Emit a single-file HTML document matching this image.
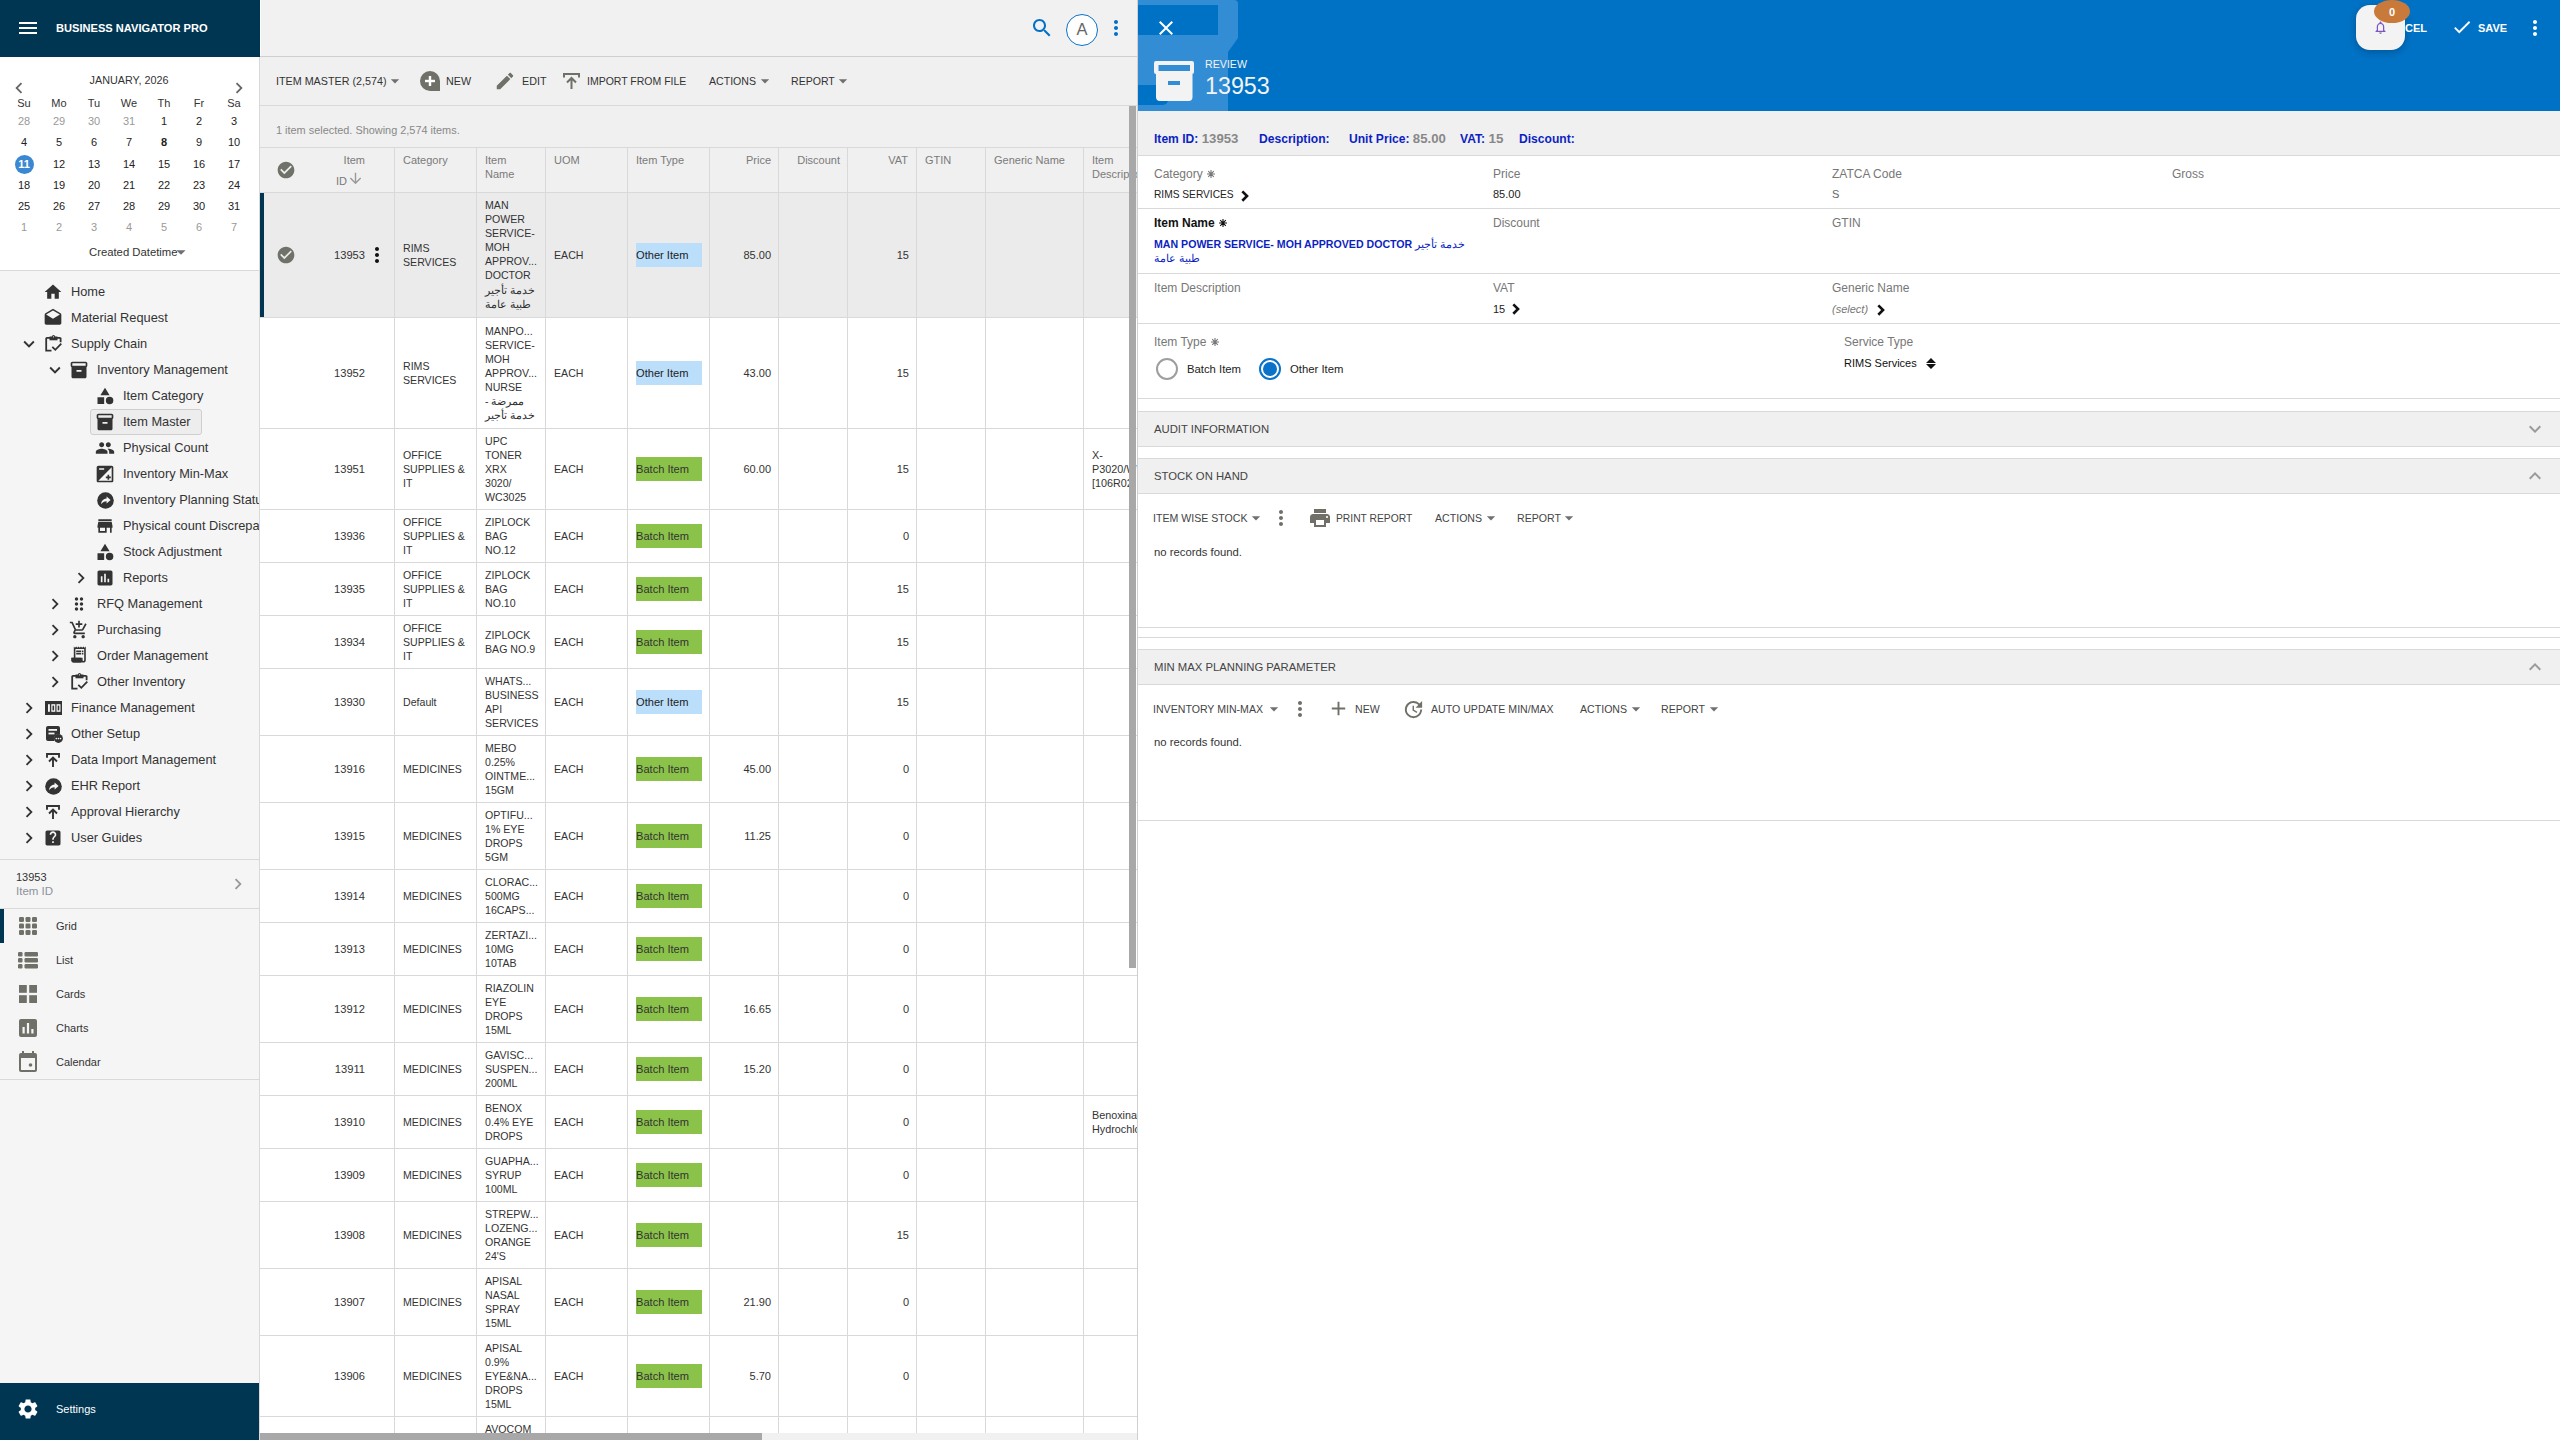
<!DOCTYPE html><html><head><meta charset="utf-8"><style>
*{margin:0;padding:0;box-sizing:border-box}
html,body{width:2560px;height:1440px;overflow:hidden;background:#fff;font-family:"Liberation Sans", sans-serif}
.a{position:absolute}
.t{position:absolute;white-space:nowrap}
</style></head><body>
<div class="a" style="left:0px;top:0px;width:260px;height:57px;background:#003652;"></div>
<svg class="a" style="left:16px;top:16px;" width="24" height="24" viewBox="0 0 24 24"><path fill="#fff" d="M3 18h18v-2H3v2zm0-5h18v-2H3v2zm0-7v2h18V6H3z"/></svg>
<div class="t" style="left:56px;top:18.0px;font-size:11.1px;line-height:20px;color:#fff;font-weight:700;">BUSINESS NAVIGATOR PRO</div>
<div class="a" style="left:0px;top:57px;width:259px;height:214px;background:#fff;"></div>
<div class="a" style="left:0px;top:270px;width:259px;height:1px;background:#d9d9d9;"></div>
<div class="t" style="left:-21px;width:300px;text-align:center;top:70.0px;font-size:10.8px;line-height:20px;color:#333;font-weight:400;">JANUARY, 2026</div>
<svg class="a" style="left:8px;top:77px;" width="22" height="22" viewBox="0 0 24 24"><path fill="#666" d="M15.41 7.41L14 6l-6 6 6 6 1.41-1.41L10.83 12z"/></svg>
<svg class="a" style="left:228px;top:77px;" width="22" height="22" viewBox="0 0 24 24"><path fill="#666" d="M10 6L8.59 7.41 13.17 12l-4.58 4.59L10 18l6-6z"/></svg>
<div class="t" style="left:-126px;width:300px;text-align:center;top:93.0px;font-size:11px;line-height:20px;color:#333;font-weight:400;">Su</div>
<div class="t" style="left:-91px;width:300px;text-align:center;top:93.0px;font-size:11px;line-height:20px;color:#333;font-weight:400;">Mo</div>
<div class="t" style="left:-56px;width:300px;text-align:center;top:93.0px;font-size:11px;line-height:20px;color:#333;font-weight:400;">Tu</div>
<div class="t" style="left:-21px;width:300px;text-align:center;top:93.0px;font-size:11px;line-height:20px;color:#333;font-weight:400;">We</div>
<div class="t" style="left:14px;width:300px;text-align:center;top:93.0px;font-size:11px;line-height:20px;color:#333;font-weight:400;">Th</div>
<div class="t" style="left:49px;width:300px;text-align:center;top:93.0px;font-size:11px;line-height:20px;color:#333;font-weight:400;">Fr</div>
<div class="t" style="left:84px;width:300px;text-align:center;top:93.0px;font-size:11px;line-height:20px;color:#333;font-weight:400;">Sa</div>
<div class="t" style="left:-126px;width:300px;text-align:center;top:111.0px;font-size:11px;line-height:20px;color:#999;font-weight:400;">28</div>
<div class="t" style="left:-91px;width:300px;text-align:center;top:111.0px;font-size:11px;line-height:20px;color:#999;font-weight:400;">29</div>
<div class="t" style="left:-56px;width:300px;text-align:center;top:111.0px;font-size:11px;line-height:20px;color:#999;font-weight:400;">30</div>
<div class="t" style="left:-21px;width:300px;text-align:center;top:111.0px;font-size:11px;line-height:20px;color:#999;font-weight:400;">31</div>
<div class="t" style="left:14px;width:300px;text-align:center;top:111.0px;font-size:11px;line-height:20px;color:#222;font-weight:400;">1</div>
<div class="t" style="left:49px;width:300px;text-align:center;top:111.0px;font-size:11px;line-height:20px;color:#222;font-weight:400;">2</div>
<div class="t" style="left:84px;width:300px;text-align:center;top:111.0px;font-size:11px;line-height:20px;color:#222;font-weight:400;">3</div>
<div class="t" style="left:-126px;width:300px;text-align:center;top:132.0px;font-size:11px;line-height:20px;color:#222;font-weight:400;">4</div>
<div class="t" style="left:-91px;width:300px;text-align:center;top:132.0px;font-size:11px;line-height:20px;color:#222;font-weight:400;">5</div>
<div class="t" style="left:-56px;width:300px;text-align:center;top:132.0px;font-size:11px;line-height:20px;color:#222;font-weight:400;">6</div>
<div class="t" style="left:-21px;width:300px;text-align:center;top:132.0px;font-size:11px;line-height:20px;color:#222;font-weight:400;">7</div>
<div class="t" style="left:14px;width:300px;text-align:center;top:132.0px;font-size:11px;line-height:20px;color:#222;font-weight:700;">8</div>
<div class="t" style="left:49px;width:300px;text-align:center;top:132.0px;font-size:11px;line-height:20px;color:#222;font-weight:400;">9</div>
<div class="t" style="left:84px;width:300px;text-align:center;top:132.0px;font-size:11px;line-height:20px;color:#222;font-weight:400;">10</div>
<div class="a" style="left:14.5px;top:154.5px;width:19px;height:19px;border-radius:50%;background:#3a87d2"></div>
<div class="t" style="left:-126px;width:300px;text-align:center;top:154.0px;font-size:11px;line-height:20px;color:#fff;font-weight:700;">11</div>
<div class="t" style="left:-91px;width:300px;text-align:center;top:154.0px;font-size:11px;line-height:20px;color:#222;font-weight:400;">12</div>
<div class="t" style="left:-56px;width:300px;text-align:center;top:154.0px;font-size:11px;line-height:20px;color:#222;font-weight:400;">13</div>
<div class="t" style="left:-21px;width:300px;text-align:center;top:154.0px;font-size:11px;line-height:20px;color:#222;font-weight:400;">14</div>
<div class="t" style="left:14px;width:300px;text-align:center;top:154.0px;font-size:11px;line-height:20px;color:#222;font-weight:400;">15</div>
<div class="t" style="left:49px;width:300px;text-align:center;top:154.0px;font-size:11px;line-height:20px;color:#222;font-weight:400;">16</div>
<div class="t" style="left:84px;width:300px;text-align:center;top:154.0px;font-size:11px;line-height:20px;color:#222;font-weight:400;">17</div>
<div class="t" style="left:-126px;width:300px;text-align:center;top:175.0px;font-size:11px;line-height:20px;color:#222;font-weight:400;">18</div>
<div class="t" style="left:-91px;width:300px;text-align:center;top:175.0px;font-size:11px;line-height:20px;color:#222;font-weight:400;">19</div>
<div class="t" style="left:-56px;width:300px;text-align:center;top:175.0px;font-size:11px;line-height:20px;color:#222;font-weight:400;">20</div>
<div class="t" style="left:-21px;width:300px;text-align:center;top:175.0px;font-size:11px;line-height:20px;color:#222;font-weight:400;">21</div>
<div class="t" style="left:14px;width:300px;text-align:center;top:175.0px;font-size:11px;line-height:20px;color:#222;font-weight:400;">22</div>
<div class="t" style="left:49px;width:300px;text-align:center;top:175.0px;font-size:11px;line-height:20px;color:#222;font-weight:400;">23</div>
<div class="t" style="left:84px;width:300px;text-align:center;top:175.0px;font-size:11px;line-height:20px;color:#222;font-weight:400;">24</div>
<div class="t" style="left:-126px;width:300px;text-align:center;top:196.0px;font-size:11px;line-height:20px;color:#222;font-weight:400;">25</div>
<div class="t" style="left:-91px;width:300px;text-align:center;top:196.0px;font-size:11px;line-height:20px;color:#222;font-weight:400;">26</div>
<div class="t" style="left:-56px;width:300px;text-align:center;top:196.0px;font-size:11px;line-height:20px;color:#222;font-weight:400;">27</div>
<div class="t" style="left:-21px;width:300px;text-align:center;top:196.0px;font-size:11px;line-height:20px;color:#222;font-weight:400;">28</div>
<div class="t" style="left:14px;width:300px;text-align:center;top:196.0px;font-size:11px;line-height:20px;color:#222;font-weight:400;">29</div>
<div class="t" style="left:49px;width:300px;text-align:center;top:196.0px;font-size:11px;line-height:20px;color:#222;font-weight:400;">30</div>
<div class="t" style="left:84px;width:300px;text-align:center;top:196.0px;font-size:11px;line-height:20px;color:#222;font-weight:400;">31</div>
<div class="t" style="left:-126px;width:300px;text-align:center;top:217.0px;font-size:11px;line-height:20px;color:#999;font-weight:400;">1</div>
<div class="t" style="left:-91px;width:300px;text-align:center;top:217.0px;font-size:11px;line-height:20px;color:#999;font-weight:400;">2</div>
<div class="t" style="left:-56px;width:300px;text-align:center;top:217.0px;font-size:11px;line-height:20px;color:#999;font-weight:400;">3</div>
<div class="t" style="left:-21px;width:300px;text-align:center;top:217.0px;font-size:11px;line-height:20px;color:#999;font-weight:400;">4</div>
<div class="t" style="left:14px;width:300px;text-align:center;top:217.0px;font-size:11px;line-height:20px;color:#999;font-weight:400;">5</div>
<div class="t" style="left:49px;width:300px;text-align:center;top:217.0px;font-size:11px;line-height:20px;color:#999;font-weight:400;">6</div>
<div class="t" style="left:84px;width:300px;text-align:center;top:217.0px;font-size:11px;line-height:20px;color:#999;font-weight:400;">7</div>
<div class="t" style="left:89px;top:242.0px;font-size:11.3px;line-height:20px;color:#333;font-weight:400;">Created Datetime</div>
<svg class="a" style="left:170px;top:240.5px;" width="22" height="22" viewBox="0 0 24 24"><path fill="#707070" d="M7 10l5 5 5-5z"/></svg>
<div class="a" style="left:0px;top:271px;width:259px;height:1112px;background:#f5f5f5;"></div>
<div class="a" style="left:259px;top:57px;width:1px;height:1383px;background:#d9d9d9;"></div>
<div class="a" style="left:0;top:271px;width:259px;height:600px;overflow:hidden">
<svg class="a" style="left:43px;top:10.75px;" width="20" height="20" viewBox="0 0 24 24"><path fill="#333" d="M10 20v-6h4v6h5v-8h3L12 3 2 12h3v8z"/></svg>
<div class="t" style="left:71px;top:10.75px;font-size:12.8px;line-height:20px;color:#333;font-weight:400;">Home</div>
<svg class="a" style="left:43px;top:36.75px;" width="20" height="20" viewBox="0 0 24 24"><path fill="#333" d="M21.99 8c0-.72-.37-1.35-.94-1.7L12 1 2.950 6.3C2.38 6.65 2 7.28 2 8v10c0 1.1.9 2 2 2h16c1.1 0 2-.9 2-2l-.01-10zM12 13L3.74 7.84 12 3l8.26 4.84L12 13z"/></svg>
<div class="t" style="left:71px;top:36.75px;font-size:12.8px;line-height:20px;color:#333;font-weight:400;">Material Request</div>
<svg class="a" style="left:17.5px;top:61.75px;" width="22" height="22" viewBox="0 0 24 24"><path fill="#333" d="M16.59 8.59L12 13.17 7.41 8.59 6 10l6 6 6-6z"/></svg>
<svg class="a" style="left:45px;top:64.25px;" width="17" height="17" viewBox="0 0 17 17"><path fill="none" stroke="#333" stroke-width="1.8" d="M1.2 2.8V15.6H6.5M15.6 2.8V7.2M1.2 2.8H15.6"/><path fill="#333" d="M4.5 1.5H12.5V5.3H4.5z"/><circle cx="8.5" cy="1.6" r="1.6" fill="#333"/><circle cx="8.5" cy="1.8" r="0.6" fill="#f5f5f5"/><path fill="none" stroke="#333" stroke-width="1.8" d="M7.3 11.8l3 3 6-6.2"/></svg>
<div class="t" style="left:71px;top:62.75px;font-size:12.8px;line-height:20px;color:#333;font-weight:400;">Supply Chain</div>
<svg class="a" style="left:43.5px;top:87.75px;" width="22" height="22" viewBox="0 0 24 24"><path fill="#333" d="M16.59 8.59L12 13.17 7.41 8.59 6 10l6 6 6-6z"/></svg>
<svg class="a" style="left:69px;top:88.75px;" width="20" height="20" viewBox="0 0 24 24"><path fill="#333" d="M20 2H4c-1 0-2 .9-2 2v3.01c0 .72.43 1.34 1 1.69V20c0 1.1 1.1 2 2 2h14c.9 0 2-.9 2-2V8.7c.57-.35 1-.97 1-1.69V4c0-1.1-1-2-2-2zm-5 12H9v-2h6v2zm5-7H4V4l16-.02V7z"/></svg>
<div class="t" style="left:97px;top:88.75px;font-size:12.8px;line-height:20px;color:#333;font-weight:400;">Inventory Management</div>
<svg class="a" style="left:95px;top:114.75px;" width="20" height="20" viewBox="0 0 24 24"><path fill="#333" d="M12 2l-5.5 9h11zM17.5 13a4.5 4.5 0 1 0 0 9 4.5 4.5 0 0 0 0-9zM3 13.5h8v8H3z"/></svg>
<div class="t" style="left:123px;top:114.75px;font-size:12.8px;line-height:20px;color:#333;font-weight:400;">Item Category</div>
<div class="a" style="left:90px;top:138px;width:112px;height:26px;background:#ededed;border:1px solid #cfcfcf;border-radius:3px"></div>
<svg class="a" style="left:95px;top:140.75px;" width="20" height="20" viewBox="0 0 24 24"><path fill="#333" d="M20 2H4c-1 0-2 .9-2 2v3.01c0 .72.43 1.34 1 1.69V20c0 1.1 1.1 2 2 2h14c.9 0 2-.9 2-2V8.7c.57-.35 1-.97 1-1.69V4c0-1.1-1-2-2-2zm-5 12H9v-2h6v2zm5-7H4V4l16-.02V7z"/></svg>
<div class="t" style="left:123px;top:140.75px;font-size:12.8px;line-height:20px;color:#333;font-weight:400;">Item Master</div>
<svg class="a" style="left:95px;top:166.75px;" width="20" height="20" viewBox="0 0 24 24"><path fill="#333" d="M16 11c1.66 0 2.99-1.34 2.99-3S17.66 5 16 5c-1.66 0-3 1.34-3 3s1.34 3 3 3zm-8 0c1.66 0 2.99-1.34 2.99-3S9.66 5 8 5C6.34 5 5 6.34 5 8s1.34 3 3 3zm0 2c-2.33 0-7 1.17-7 3.5V19h14v-2.5c0-2.33-4.67-3.5-7-3.5zm8 0c-.29 0-.62.02-.97.05 1.16.84 1.97 1.97 1.97 3.45V19h6v-2.5c0-2.33-4.67-3.5-7-3.5z"/></svg>
<div class="t" style="left:123px;top:166.75px;font-size:12.8px;line-height:20px;color:#333;font-weight:400;">Physical Count</div>
<svg class="a" style="left:95px;top:192.75px;" width="20" height="20" viewBox="0 0 24 24"><path fill="#333" d="M15 17v2h2v-2h2v-2h-2v-2h-2v2h-2v2h2zm5-15H4c-1.1 0-2 .9-2 2v16c0 1.1.9 2 2 2h16c1.1 0 2-.9 2-2V4c0-1.1-.9-2-2-2zM5 5h6v2H5V5zm15 15H4L20 4v16z"/></svg>
<div class="t" style="left:123px;top:192.75px;font-size:12.8px;line-height:20px;color:#333;font-weight:400;">Inventory Min-Max</div>
<svg class="a" style="left:96.7px;top:220.55px;" width="17" height="17" viewBox="0 0 17 17"><circle cx="8.5" cy="8.5" r="8.3" fill="#333"/><path fill="#f5f5f5" d="M4 12.2C4.2 9 6.3 6.8 9.6 6.6V4.4l4 3.6-4 3.6V9.2C7.2 9.3 5.6 10.3 4 12.2z"/></svg>
<div class="t" style="left:123px;top:218.75px;font-size:12.8px;line-height:20px;color:#333;font-weight:400;">Inventory Planning Status</div>
<svg class="a" style="left:95px;top:244.75px;" width="20" height="20" viewBox="0 0 24 24"><path fill="#333" d="M20 4H4v2h16V4zm1 10v-2l-1-5H4l-1 5v2h1v6h10v-6h4v6h2v-6h1zm-9 4H6v-4h6v4z"/></svg>
<div class="t" style="left:123px;top:244.75px;font-size:12.8px;line-height:20px;color:#333;font-weight:400;">Physical count Discrepancy</div>
<svg class="a" style="left:95px;top:270.75px;" width="20" height="20" viewBox="0 0 24 24"><path fill="#333" d="M12 2l-5.5 9h11zM17.5 13a4.5 4.5 0 1 0 0 9 4.5 4.5 0 0 0 0-9zM3 13.5h8v8H3z"/></svg>
<div class="t" style="left:123px;top:270.75px;font-size:12.8px;line-height:20px;color:#333;font-weight:400;">Stock Adjustment</div>
<svg class="a" style="left:69.5px;top:295.75px;" width="22" height="22" viewBox="0 0 24 24"><path fill="#333" d="M10 6L8.59 7.41 13.17 12l-4.58 4.59L10 18l6-6z"/></svg>
<svg class="a" style="left:95px;top:296.75px;" width="20" height="20" viewBox="0 0 24 24"><path fill="#333" d="M19 3H5c-1.1 0-2 .9-2 2v14c0 1.1.9 2 2 2h14c1.1 0 2-.9 2-2V5c0-1.1-.9-2-2-2zM9 17H7v-7h2v7zm4 0h-2V7h2v10zm4 0h-2v-4h2v4z"/></svg>
<div class="t" style="left:123px;top:296.75px;font-size:12.8px;line-height:20px;color:#333;font-weight:400;">Reports</div>
<svg class="a" style="left:43.5px;top:321.75px;" width="22" height="22" viewBox="0 0 24 24"><path fill="#333" d="M10 6L8.59 7.41 13.17 12l-4.58 4.59L10 18l6-6z"/></svg>
<svg class="a" style="left:69px;top:322.75px;" width="20" height="20" viewBox="0 0 24 24"><path fill="#333" d="M11 18c0 1.1-.9 2-2 2s-2-.9-2-2 .9-2 2-2 2 .9 2 2zm-2-8c-1.1 0-2 .9-2 2s.9 2 2 2 2-.9 2-2-.9-2-2-2zm0-6c-1.1 0-2 .9-2 2s.9 2 2 2 2-.9 2-2-.9-2-2-2zm6 4c1.1 0 2-.9 2-2s-.9-2-2-2-2 .9-2 2 .9 2 2 2zm0 2c-1.1 0-2 .9-2 2s.9 2 2 2 2-.9 2-2-.9-2-2-2zm0 6c-1.1 0-2 .9-2 2s.9 2 2 2 2-.9 2-2-.9-2-2-2z"/></svg>
<div class="t" style="left:97px;top:322.75px;font-size:12.8px;line-height:20px;color:#333;font-weight:400;">RFQ Management</div>
<svg class="a" style="left:43.5px;top:347.75px;" width="22" height="22" viewBox="0 0 24 24"><path fill="#333" d="M10 6L8.59 7.41 13.17 12l-4.58 4.59L10 18l6-6z"/></svg>
<svg class="a" style="left:69px;top:348.75px;" width="20" height="20" viewBox="0 0 24 24"><path fill="#333" d="M11 9h2V6h3V4h-3V1h-2v3H8v2h3v3zm-4 9c-1.1 0-1.99.9-1.99 2S5.9 22 7 22s2-.9 2-2-.9-2-2-2zm10 0c-1.1 0-1.99.9-1.99 2s.89 2 1.99 2 2-.9 2-2-.9-2-2-2zm-9.83-3.25l.03-.12.9-1.63h7.45c.75 0 1.41-.41 1.75-1.03l3.86-7.01L19.42 4h-.01l-1.1 2-2.76 5H8.53l-.13-.27L6.16 6l-.95-2-.94-2H1v2h2l3.6 7.59-1.35 2.45c-.16.28-.25.61-.25.96 0 1.1.9 2 2 2h12v-2H7.42c-.13 0-.25-.11-.25-.25z"/></svg>
<div class="t" style="left:97px;top:348.75px;font-size:12.8px;line-height:20px;color:#333;font-weight:400;">Purchasing</div>
<svg class="a" style="left:43.5px;top:373.75px;" width="22" height="22" viewBox="0 0 24 24"><path fill="#333" d="M10 6L8.59 7.41 13.17 12l-4.58 4.59L10 18l6-6z"/></svg>
<svg class="a" style="left:69.3px;top:374.05px" width="19.2" height="19.2" viewBox="0 0 24 24"><path fill="#333" d="M19.5 3.5L18 2l-1.5 1.5L15 2l-1.5 1.5L12 2l-1.5 1.5L9 2 7.5 3.5 6 2v14H3v3c0 1.66 1.34 3 3 3h12c1.66 0 3-1.34 3-3V2l-1.5 1.5zM15 20H6c-.55 0-1-.45-1-1v-1h10v2zm4-1c0 .55-.45 1-1 1s-1-.45-1-1v-3H8V5h11v14zM9 7h6v2H9zm7 0h2v2h-2zm-7 3h6v2H9zm7 0h2v2h-2z"/><path fill="#333" d="M3 16h12v6H6a3 3 0 0 1 -3 -3z"/></svg>
<div class="t" style="left:97px;top:374.75px;font-size:12.8px;line-height:20px;color:#333;font-weight:400;">Order Management</div>
<svg class="a" style="left:43.5px;top:399.75px;" width="22" height="22" viewBox="0 0 24 24"><path fill="#333" d="M10 6L8.59 7.41 13.17 12l-4.58 4.59L10 18l6-6z"/></svg>
<svg class="a" style="left:71px;top:402.25px;" width="17" height="17" viewBox="0 0 17 17"><path fill="none" stroke="#333" stroke-width="1.8" d="M1.2 2.8V15.6H6.5M15.6 2.8V7.2M1.2 2.8H15.6"/><path fill="#333" d="M4.5 1.5H12.5V5.3H4.5z"/><circle cx="8.5" cy="1.6" r="1.6" fill="#333"/><circle cx="8.5" cy="1.8" r="0.6" fill="#f5f5f5"/><path fill="none" stroke="#333" stroke-width="1.8" d="M7.3 11.8l3 3 6-6.2"/></svg>
<div class="t" style="left:97px;top:400.75px;font-size:12.8px;line-height:20px;color:#333;font-weight:400;">Other Inventory</div>
<svg class="a" style="left:17.5px;top:425.75px;" width="22" height="22" viewBox="0 0 24 24"><path fill="#333" d="M10 6L8.59 7.41 13.17 12l-4.58 4.59L10 18l6-6z"/></svg>
<svg class="a" style="left:44.7px;top:430.15px;" width="17" height="14" viewBox="0 0 17 14"><rect width="17" height="14" fill="#333"/><rect x="3" y="3.2" width="1.9" height="7.6" fill="#f5f5f5"/><rect x="6.3" y="3.2" width="4" height="7.6" fill="#f5f5f5"/><rect x="7.5" y="4.6" width="1.6" height="4.8" fill="#333"/><rect x="11.5" y="3.2" width="4" height="7.6" fill="#f5f5f5"/><rect x="12.7" y="4.6" width="1.6" height="4.8" fill="#333"/></svg>
<div class="t" style="left:71px;top:426.75px;font-size:12.8px;line-height:20px;color:#333;font-weight:400;">Finance Management</div>
<svg class="a" style="left:17.5px;top:451.75px;" width="22" height="22" viewBox="0 0 24 24"><path fill="#333" d="M10 6L8.59 7.41 13.17 12l-4.58 4.59L10 18l6-6z"/></svg>
<svg class="a" style="left:45.5px;top:455.25px;" width="17" height="17" viewBox="0 0 17 17"><path fill="#333" d="M2 0H12a2 2 0 0 1 2 2V8.2A5 5 0 0 0 8.2 15H2a2 2 0 0 1 -2 -2V2a2 2 0 0 1 2 -2z"/><rect x="2.5" y="3" width="8.5" height="1.8" fill="#f5f5f5"/><rect x="2.5" y="6.6" width="6" height="1.8" fill="#f5f5f5"/><circle cx="12.4" cy="12.4" r="4.5" fill="#333"/><circle cx="10.3" cy="12.6" r=".8" fill="#f5f5f5"/><circle cx="12.4" cy="12.6" r=".8" fill="#f5f5f5"/><circle cx="14.5" cy="12.6" r=".8" fill="#f5f5f5"/></svg>
<div class="t" style="left:71px;top:452.75px;font-size:12.8px;line-height:20px;color:#333;font-weight:400;">Other Setup</div>
<svg class="a" style="left:17.5px;top:477.75px;" width="22" height="22" viewBox="0 0 24 24"><path fill="#333" d="M10 6L8.59 7.41 13.17 12l-4.58 4.59L10 18l6-6z"/></svg>
<svg class="a" style="left:46px;top:482.05px;" width="14" height="14" viewBox="0 0 14 14"><path fill="none" stroke="#333" stroke-width="1.9" d="M1 4.8V1H13V4.8"/><path fill="none" stroke="#333" stroke-width="1.9" d="M7 14V4.5M3 8.5l4-4 4 4"/></svg>
<div class="t" style="left:71px;top:478.75px;font-size:12.8px;line-height:20px;color:#333;font-weight:400;">Data Import Management</div>
<svg class="a" style="left:17.5px;top:503.75px;" width="22" height="22" viewBox="0 0 24 24"><path fill="#333" d="M10 6L8.59 7.41 13.17 12l-4.58 4.59L10 18l6-6z"/></svg>
<svg class="a" style="left:44.7px;top:506.55px;" width="17" height="17" viewBox="0 0 17 17"><circle cx="8.5" cy="8.5" r="8.3" fill="#333"/><path fill="#f5f5f5" d="M4 12.2C4.2 9 6.3 6.8 9.6 6.6V4.4l4 3.6-4 3.6V9.2C7.2 9.3 5.6 10.3 4 12.2z"/></svg>
<div class="t" style="left:71px;top:504.75px;font-size:12.8px;line-height:20px;color:#333;font-weight:400;">EHR Report</div>
<svg class="a" style="left:17.5px;top:529.75px;" width="22" height="22" viewBox="0 0 24 24"><path fill="#333" d="M10 6L8.59 7.41 13.17 12l-4.58 4.59L10 18l6-6z"/></svg>
<svg class="a" style="left:46px;top:534.05px;" width="14" height="14" viewBox="0 0 14 14"><path fill="none" stroke="#333" stroke-width="1.9" d="M1 4.8V1H13V4.8"/><path fill="none" stroke="#333" stroke-width="1.9" d="M7 14V4.5M3 8.5l4-4 4 4"/></svg>
<div class="t" style="left:71px;top:530.75px;font-size:12.8px;line-height:20px;color:#333;font-weight:400;">Approval Hierarchy</div>
<svg class="a" style="left:17.5px;top:555.75px;" width="22" height="22" viewBox="0 0 24 24"><path fill="#333" d="M10 6L8.59 7.41 13.17 12l-4.58 4.59L10 18l6-6z"/></svg>
<svg class="a" style="left:43px;top:556.75px;" width="20" height="20" viewBox="0 0 24 24"><path fill="#333" d="M19 3H5c-1.11 0-2 .9-2 2v14c0 1.1.89 2 2 2h14c1.1 0 2-.9 2-2V5c0-1.1-.9-2-2-2zm-6 15h-2v-2h2v2zm2.07-7.75l-.9.92C13.45 11.9 13 12.5 13 14h-2v-.5c0-1.1.45-2.1 1.17-2.83l1.24-1.26c.37-.36.59-.86.59-1.41 0-1.1-.9-2-2-2s-2 .9-2 2H8c0-2.21 1.79-4 4-4s4 1.79 4 4c0 .88-.36 1.68-.93 2.25z"/></svg>
<div class="t" style="left:71px;top:556.75px;font-size:12.8px;line-height:20px;color:#333;font-weight:400;">User Guides</div>
</div>
<div class="a" style="left:0px;top:859px;width:259px;height:1px;background:#d9d9d9;"></div>
<div class="t" style="left:16px;top:867.0px;font-size:11px;line-height:20px;color:#333;font-weight:400;">13953</div>
<div class="t" style="left:16px;top:880.5px;font-size:11.5px;line-height:20px;color:#8d929c;font-weight:400;">Item ID</div>
<svg class="a" style="left:227px;top:873px;" width="22" height="22" viewBox="0 0 24 24"><path fill="#999" d="M10 6L8.59 7.41 13.17 12l-4.58 4.59L10 18l6-6z"/></svg>
<div class="a" style="left:0px;top:908px;width:259px;height:1px;background:#d9d9d9;"></div>
<div class="a" style="left:0px;top:909px;width:4px;height:34px;background:#003652;"></div>
<svg class="a" style="left:19px;top:917px;" width="18" height="18" viewBox="0 0 18 18"><rect x="0" y="0" width="5" height="5" rx="1.2" fill="#6f7168"/><rect x="0" y="6.5" width="5" height="5" rx="1.2" fill="#6f7168"/><rect x="0" y="13" width="5" height="5" rx="1.2" fill="#6f7168"/><rect x="6.5" y="0" width="5" height="5" rx="1.2" fill="#6f7168"/><rect x="6.5" y="6.5" width="5" height="5" rx="1.2" fill="#6f7168"/><rect x="6.5" y="13" width="5" height="5" rx="1.2" fill="#6f7168"/><rect x="13" y="0" width="5" height="5" rx="1.2" fill="#6f7168"/><rect x="13" y="6.5" width="5" height="5" rx="1.2" fill="#6f7168"/><rect x="13" y="13" width="5" height="5" rx="1.2" fill="#6f7168"/></svg>
<svg class="a" style="left:18px;top:952px;" width="20" height="17" viewBox="0 0 20 17"><rect x="0" y="0" width="4.5" height="4.5" rx="1.2" fill="#6f7168"/><rect x="6.5" y="0" width="13.5" height="4.5" rx="1.2" fill="#6f7168"/><rect x="0" y="6" width="4.5" height="4.5" rx="1.2" fill="#6f7168"/><rect x="6.5" y="6" width="13.5" height="4.5" rx="1.2" fill="#6f7168"/><rect x="0" y="12" width="4.5" height="4.5" rx="1.2" fill="#6f7168"/><rect x="6.5" y="12" width="13.5" height="4.5" rx="1.2" fill="#6f7168"/></svg>
<svg class="a" style="left:19px;top:985px;" width="18" height="18" viewBox="0 0 18 18"><rect x="0" y="0" width="7.8" height="7.8" fill="#6f7168"/><rect x="0" y="10.2" width="7.8" height="7.8" fill="#6f7168"/><rect x="10.2" y="0" width="7.8" height="7.8" fill="#6f7168"/><rect x="10.2" y="10.2" width="7.8" height="7.8" fill="#6f7168"/></svg>
<svg class="a" style="left:19px;top:1019px;" width="18" height="18" viewBox="0 0 18 18"><rect x="0" y="0" width="18" height="18" rx="2" fill="#6f7168"/><rect x="3.5" y="8" width="2.2" height="6.5" fill="#f5f5f5"/><rect x="7.9" y="4" width="2.2" height="10.5" fill="#f5f5f5"/><rect x="12.3" y="10" width="2.2" height="4.5" fill="#f5f5f5"/></svg>
<svg class="a" style="left:19px;top:1051px;" width="18" height="21" viewBox="0 0 18 21"><path fill="#6f7168" d="M3 0h2v2h8V0h2v2h1a2 2 0 0 1 2 2v15a2 2 0 0 1 -2 2H2a2 2 0 0 1 -2 -2V4a2 2 0 0 1 2 -2h1zM2 7v12h14V7z"/><circle cx="11.5" cy="14" r="1.8" fill="#6f7168"/></svg>
<div class="t" style="left:56px;top:916.0px;font-size:11px;line-height:20px;color:#333;font-weight:400;">Grid</div>
<div class="t" style="left:56px;top:950.0px;font-size:11px;line-height:20px;color:#333;font-weight:400;">List</div>
<div class="t" style="left:56px;top:984.0px;font-size:11px;line-height:20px;color:#333;font-weight:400;">Cards</div>
<div class="t" style="left:56px;top:1018.0px;font-size:11px;line-height:20px;color:#333;font-weight:400;">Charts</div>
<div class="t" style="left:56px;top:1052.0px;font-size:11px;line-height:20px;color:#333;font-weight:400;">Calendar</div>
<div class="a" style="left:0px;top:1079px;width:259px;height:1px;background:#d9d9d9;"></div>
<div class="a" style="left:0px;top:1383px;width:259px;height:57px;background:#003652;"></div>
<svg class="a" style="left:16px;top:1397px;" width="24" height="24" viewBox="0 0 24 24"><path fill="#fff" d="M19.14 12.94c.04-.3.06-.61.06-.94 0-.32-.02-.64-.07-.94l2.03-1.58c.18-.14.23-.41.12-.61l-1.92-3.32c-.12-.22-.37-.29-.59-.22l-2.39.96c-.5-.38-1.03-.7-1.62-.94l-.36-2.54c-.04-.24-.24-.41-.48-.41h-3.84c-.24 0-.43.17-.47.41l-.36 2.54c-.59.24-1.13.57-1.62.94l-2.39-.96c-.22-.08-.47 0-.59.22L2.74 8.87c-.12.21-.08.47.12.61l2.03 1.58c-.05.3-.09.63-.09.94s.02.64.07.94l-2.03 1.58c-.18.14-.23.41-.12.61l1.92 3.32c.12.22.37.29.59.22l2.39-.96c.5.38 1.03.7 1.62.94l.36 2.54c.05.24.24.41.48.41h3.84c.24 0 .44-.17.47-.41l.36-2.54c.59-.24 1.13-.56 1.62-.94l2.39.96c.22.08.47 0 .59-.22l1.92-3.32c.12-.22.07-.47-.12-.61l-2.01-1.58zM12 15.6c-1.98 0-3.6-1.62-3.6-3.6s1.62-3.6 3.6-3.6 3.6 1.62 3.6 3.6-1.62 3.6-3.6 3.6z"/></svg>
<div class="t" style="left:56px;top:1399.0px;font-size:11px;line-height:20px;color:#fff;font-weight:400;">Settings</div>
<div class="a" style="left:260px;top:0px;width:877px;height:56px;background:#f1f1f1;"></div>
<div class="a" style="left:260px;top:0px;width:1px;height:56px;background:#fff;"></div>
<div class="a" style="left:260px;top:56px;width:877px;height:1px;background:#cfcfcf;"></div>
<svg class="a" style="left:1030px;top:16px;" width="24" height="24" viewBox="0 0 24 24"><path fill="#0070c9" d="M15.5 14h-.79l-.28-.27C15.41 12.59 16 11.11 16 9.5 16 5.91 13.09 3 9.5 3S3 5.91 3 9.5 5.91 16 9.5 16c1.61 0 3.090-.59 4.23-1.57l.27.28v.79l5 4.99L20.49 19l-4.99-5zm-6 0C7.01 14 5 11.99 5 9.5S7.01 5 9.5 5 14 7.01 14 9.5 11.99 14 9.5 14z"/></svg>
<div class="a" style="left:1066px;top:14px;width:32px;height:32px;border-radius:50%;border:1.5px solid #0a72c8;background:#fff"></div>
<div class="t" style="left:932px;width:300px;text-align:center;top:18.7px;font-size:16.5px;line-height:20px;color:#666;font-weight:400;">A</div>
<svg class="a" style="left:1104px;top:16px;" width="24" height="24" viewBox="0 0 24 24"><path fill="#0070c9" d="M12 8c1.1 0 2-.9 2-2s-.9-2-2-2-2 .9-2 2 .9 2 2 2zm0 2c-1.1 0-2 .9-2 2s.9 2 2 2 2-.9 2-2-.9-2-2-2zm0 6c-1.1 0-2 .9-2 2s.9 2 2 2 2-.9 2-2-.9-2-2-2z"/></svg>
<div class="a" style="left:260px;top:57px;width:877px;height:48px;background:#f0f0f0;"></div>
<div class="a" style="left:260px;top:105px;width:877px;height:1px;background:#d9d9d9;"></div>
<div class="t" style="left:276px;top:71.0px;font-size:10.75px;line-height:20px;color:#333;font-weight:400;">ITEM MASTER (2,574)</div>
<svg class="a" style="left:385px;top:71px;" width="20" height="20" viewBox="0 0 24 24"><path fill="#707070" d="M7 10l5 5 5-5z"/></svg>
<svg class="a" style="left:420px;top:71px;" width="20" height="20" viewBox="0 0 20 20"><path fill="#6f7168" d="M10 0A10 10 0 0 0 0 10 10 10 0 0 0 10 20H20V10A10 10 0 0 0 10 0z"/><rect x="5" y="8.8" width="10" height="2.4" fill="#fff"/><rect x="8.8" y="5" width="2.4" height="10" fill="#fff"/></svg>
<div class="t" style="left:446px;top:71.0px;font-size:10.75px;line-height:20px;color:#333;font-weight:400;">NEW</div>
<svg class="a" style="left:494px;top:70px;" width="22" height="22" viewBox="0 0 24 24"><path fill="#707068" d="M3 17.25V21h3.75L17.81 9.94l-3.75-3.75L3 17.25zM20.71 7.04c.39-.39.39-1.02 0-1.41l-2.34-2.340c-.39-.39-1.02-.39-1.41 0l-1.83 1.83 3.75 3.75 1.83-1.83z"/></svg>
<div class="t" style="left:522px;top:71.0px;font-size:10.75px;line-height:20px;color:#333;font-weight:400;">EDIT</div>
<svg class="a" style="left:563px;top:73px;" width="17" height="16" viewBox="0 0 17 16"><path fill="none" stroke="#6f7168" stroke-width="2" d="M1 4.5V1H16V4.5"/><path fill="none" stroke="#6f7168" stroke-width="2" d="M8.5 16V5M4 9.5l4.5-4.5 4.5 4.5"/></svg>
<div class="t" style="left:587px;top:71.0px;font-size:10.5px;line-height:20px;color:#333;font-weight:400;">IMPORT FROM FILE</div>
<div class="t" style="left:709px;top:71.0px;font-size:10.57px;line-height:20px;color:#333;font-weight:400;">ACTIONS</div>
<svg class="a" style="left:755px;top:71px;" width="20" height="20" viewBox="0 0 24 24"><path fill="#707070" d="M7 10l5 5 5-5z"/></svg>
<div class="t" style="left:791px;top:71.0px;font-size:10.57px;line-height:20px;color:#333;font-weight:400;">REPORT</div>
<svg class="a" style="left:832.5px;top:71px;" width="20" height="20" viewBox="0 0 24 24"><path fill="#707070" d="M7 10l5 5 5-5z"/></svg>
<div class="a" style="left:260px;top:106px;width:877px;height:41px;background:#f0f0f0;"></div>
<div class="t" style="left:276px;top:120.0px;font-size:10.92px;line-height:20px;color:#888;font-weight:400;">1 item selected. Showing 2,574 items.</div>
<div class="a" style="left:260px;top:147px;width:877px;height:1px;background:#d9d9d9;"></div>
<div class="a" style="left:260px;top:148px;width:877px;height:44px;background:#f0f0f0;"></div>
<div class="a" style="left:260px;top:192px;width:877px;height:1px;background:#d9d9d9;"></div>
<div class="a" style="left:260px;top:0;width:877px;height:1433px;overflow:hidden">
<svg class="a" style="left:16px;top:160px;" width="20" height="20" viewBox="0 0 24 24"><path fill="#6f7268" d="M12 2C6.48 2 2 6.48 2 12s4.48 10 10 10 10-4.48 10-10S17.52 2 12 2zm-2 15l-5-5 1.41-1.41L10 14.17l7.590-7.59L19 8l-9 9z"/></svg>
<div class="t" style="left:-195px;width:300px;text-align:right;top:150.0px;font-size:11px;line-height:20px;color:#7a7a7a;font-weight:400;">Item</div>
<div class="t" style="left:76px;top:170.5px;font-size:11px;line-height:20px;color:#7a7a7a;font-weight:400;">ID</div>
<svg class="a" style="left:87px;top:170px;" width="17" height="17" viewBox="0 0 24 24"><path fill="#9a9a9a" d="M20 12l-1.41-1.41L13 16.17V4h-2v12.17l-5.58-5.59L4 12l8 8 8-8z"/></svg>
<div class="t" style="left:143px;top:150.0px;font-size:11px;line-height:20px;color:#7a7a7a;font-weight:400;">Category</div>
<div class="t" style="left:225px;top:150.0px;font-size:11px;line-height:20px;color:#7a7a7a;font-weight:400;">Item</div>
<div class="t" style="left:225px;top:164.0px;font-size:11px;line-height:20px;color:#7a7a7a;font-weight:400;">Name</div>
<div class="t" style="left:294px;top:150.0px;font-size:11px;line-height:20px;color:#7a7a7a;font-weight:400;">UOM</div>
<div class="t" style="left:376px;top:150.0px;font-size:11px;line-height:20px;color:#7a7a7a;font-weight:400;">Item Type</div>
<div class="t" style="left:211px;width:300px;text-align:right;top:150.0px;font-size:11px;line-height:20px;color:#7a7a7a;font-weight:400;">Price</div>
<div class="t" style="left:280px;width:300px;text-align:right;top:150.0px;font-size:11px;line-height:20px;color:#7a7a7a;font-weight:400;">Discount</div>
<div class="t" style="left:348px;width:300px;text-align:right;top:150.0px;font-size:11px;line-height:20px;color:#7a7a7a;font-weight:400;">VAT</div>
<div class="t" style="left:665px;top:150.0px;font-size:11px;line-height:20px;color:#7a7a7a;font-weight:400;">GTIN</div>
<div class="t" style="left:734px;top:150.0px;font-size:11px;line-height:20px;color:#7a7a7a;font-weight:400;">Generic Name</div>
<div class="t" style="left:832px;top:150.0px;font-size:11px;line-height:20px;color:#7a7a7a;font-weight:400;">Item</div>
<div class="t" style="left:832px;top:164.0px;font-size:11px;line-height:20px;color:#7a7a7a;font-weight:400;">Description</div>
<div class="a" style="left:0px;top:193px;width:877px;height:124px;background:#ebebeb;"></div>
<div class="a" style="left:0px;top:193px;width:4px;height:124px;background:#003652;"></div>
<svg class="a" style="left:16px;top:245.0px;" width="20" height="20" viewBox="0 0 24 24"><path fill="#6f7268" d="M12 2C6.48 2 2 6.48 2 12s4.48 10 10 10 10-4.48 10-10S17.52 2 12 2zm-2 15l-5-5 1.41-1.41L10 14.17l7.590-7.59L19 8l-9 9z"/></svg>
<svg class="a" style="left:105px;top:243.0px;" width="24" height="24" viewBox="0 0 24 24"><path fill="#111" d="M12 8c1.1 0 2-.9 2-2s-.9-2-2-2-2 .9-2 2 .9 2 2 2zm0 2c-1.1 0-2 .9-2 2s.9 2 2 2 2-.9 2-2-.9-2-2-2zm0 6c-1.1 0-2 .9-2 2s.9 2 2 2 2-.9 2-2-.9-2-2-2z"/></svg>
<div class="a" style="left:0px;top:317px;width:877px;height:1px;background:#d9d9d9;"></div>
<div class="t" style="left:-195px;width:300px;text-align:right;top:245.0px;font-size:11.15px;line-height:20px;color:#333;font-weight:400;">13953</div>
<div class="t" style="left:225px;top:195.3px;font-size:10.6px;line-height:20px;color:#333;font-weight:400;">MAN</div>
<div class="t" style="left:225px;top:209.3px;font-size:10.6px;line-height:20px;color:#333;font-weight:400;">POWER</div>
<div class="t" style="left:225px;top:223.3px;font-size:10.6px;line-height:20px;color:#333;font-weight:400;">SERVICE-</div>
<div class="t" style="left:225px;top:237.3px;font-size:10.6px;line-height:20px;color:#333;font-weight:400;">MOH</div>
<div class="t" style="left:225px;top:251.3px;font-size:10.6px;line-height:20px;color:#333;font-weight:400;">APPROV...</div>
<div class="t" style="left:225px;top:265.3px;font-size:10.6px;line-height:20px;color:#333;font-weight:400;">DOCTOR</div>
<div class="t" style="left:225px;top:280.0px;font-size:10.6px;line-height:20px;color:#333;font-weight:400;">خدمة تأجير</div>
<div class="t" style="left:225px;top:294.0px;font-size:10.6px;line-height:20px;color:#333;font-weight:400;">طبية عامة</div>
<div class="t" style="left:143px;top:238.0px;font-size:10.6px;line-height:20px;color:#333;font-weight:400;">RIMS</div>
<div class="t" style="left:143px;top:252.0px;font-size:10.6px;line-height:20px;color:#333;font-weight:400;">SERVICES</div>
<div class="t" style="left:294px;top:245.0px;font-size:10.6px;line-height:20px;color:#333;font-weight:400;">EACH</div>
<div class="a" style="left:376px;top:243.0px;width:66px;height:24px;background:#bbdefb;"></div>
<div class="t" style="left:376px;top:245.0px;font-size:11.1px;line-height:20px;color:#222;font-weight:400;">Other Item</div>
<div class="t" style="left:211px;width:300px;text-align:right;top:245.0px;font-size:11px;line-height:20px;color:#333;font-weight:400;">85.00</div>
<div class="t" style="left:349px;width:300px;text-align:right;top:245.0px;font-size:11px;line-height:20px;color:#333;font-weight:400;">15</div>
<div class="a" style="left:0px;top:428px;width:877px;height:1px;background:#d9d9d9;"></div>
<div class="t" style="left:-195px;width:300px;text-align:right;top:363.0px;font-size:11.15px;line-height:20px;color:#333;font-weight:400;">13952</div>
<div class="t" style="left:225px;top:321.0px;font-size:10.6px;line-height:20px;color:#333;font-weight:400;">MANPO...</div>
<div class="t" style="left:225px;top:335.0px;font-size:10.6px;line-height:20px;color:#333;font-weight:400;">SERVICE-</div>
<div class="t" style="left:225px;top:349.0px;font-size:10.6px;line-height:20px;color:#333;font-weight:400;">MOH</div>
<div class="t" style="left:225px;top:363.0px;font-size:10.6px;line-height:20px;color:#333;font-weight:400;">APPROV...</div>
<div class="t" style="left:225px;top:377.0px;font-size:10.6px;line-height:20px;color:#333;font-weight:400;">NURSE</div>
<div class="t" style="left:225px;top:391.0px;font-size:10.6px;line-height:20px;color:#333;font-weight:400;">- ممرضة</div>
<div class="t" style="left:225px;top:405.0px;font-size:10.6px;line-height:20px;color:#333;font-weight:400;">خدمة تأجير</div>
<div class="t" style="left:143px;top:356.0px;font-size:10.6px;line-height:20px;color:#333;font-weight:400;">RIMS</div>
<div class="t" style="left:143px;top:370.0px;font-size:10.6px;line-height:20px;color:#333;font-weight:400;">SERVICES</div>
<div class="t" style="left:294px;top:363.0px;font-size:10.6px;line-height:20px;color:#333;font-weight:400;">EACH</div>
<div class="a" style="left:376px;top:361.0px;width:66px;height:24px;background:#bbdefb;"></div>
<div class="t" style="left:376px;top:363.0px;font-size:11.1px;line-height:20px;color:#222;font-weight:400;">Other Item</div>
<div class="t" style="left:211px;width:300px;text-align:right;top:363.0px;font-size:11px;line-height:20px;color:#333;font-weight:400;">43.00</div>
<div class="t" style="left:349px;width:300px;text-align:right;top:363.0px;font-size:11px;line-height:20px;color:#333;font-weight:400;">15</div>
<div class="a" style="left:0px;top:509px;width:877px;height:1px;background:#d9d9d9;"></div>
<div class="t" style="left:-195px;width:300px;text-align:right;top:459.0px;font-size:11.15px;line-height:20px;color:#333;font-weight:400;">13951</div>
<div class="t" style="left:225px;top:431.0px;font-size:10.6px;line-height:20px;color:#333;font-weight:400;">UPC</div>
<div class="t" style="left:225px;top:445.0px;font-size:10.6px;line-height:20px;color:#333;font-weight:400;">TONER</div>
<div class="t" style="left:225px;top:459.0px;font-size:10.6px;line-height:20px;color:#333;font-weight:400;">XRX</div>
<div class="t" style="left:225px;top:473.0px;font-size:10.6px;line-height:20px;color:#333;font-weight:400;">3020/</div>
<div class="t" style="left:225px;top:487.0px;font-size:10.6px;line-height:20px;color:#333;font-weight:400;">WC3025</div>
<div class="t" style="left:143px;top:445.0px;font-size:10.6px;line-height:20px;color:#333;font-weight:400;">OFFICE</div>
<div class="t" style="left:143px;top:459.0px;font-size:10.6px;line-height:20px;color:#333;font-weight:400;">SUPPLIES &amp;</div>
<div class="t" style="left:143px;top:473.0px;font-size:10.6px;line-height:20px;color:#333;font-weight:400;">IT</div>
<div class="t" style="left:294px;top:459.0px;font-size:10.6px;line-height:20px;color:#333;font-weight:400;">EACH</div>
<div class="a" style="left:376px;top:457.0px;width:66px;height:24px;background:#8bc34a;"></div>
<div class="t" style="left:376px;top:459.0px;font-size:11.1px;line-height:20px;color:#333;font-weight:400;">Batch Item</div>
<div class="t" style="left:211px;width:300px;text-align:right;top:459.0px;font-size:11px;line-height:20px;color:#333;font-weight:400;">60.00</div>
<div class="t" style="left:349px;width:300px;text-align:right;top:459.0px;font-size:11px;line-height:20px;color:#333;font-weight:400;">15</div>
<div class="t" style="left:832px;top:445.0px;font-size:10.8px;line-height:20px;color:#333;font-weight:400;">X-</div>
<div class="t" style="left:832px;top:459.0px;font-size:10.8px;line-height:20px;color:#333;font-weight:400;">P3020/W</div>
<div class="t" style="left:832px;top:473.0px;font-size:10.8px;line-height:20px;color:#333;font-weight:400;">[106R02</div>
<div class="a" style="left:0px;top:562px;width:877px;height:1px;background:#d9d9d9;"></div>
<div class="t" style="left:-195px;width:300px;text-align:right;top:526.0px;font-size:11.15px;line-height:20px;color:#333;font-weight:400;">13936</div>
<div class="t" style="left:225px;top:512.0px;font-size:10.6px;line-height:20px;color:#333;font-weight:400;">ZIPLOCK</div>
<div class="t" style="left:225px;top:526.0px;font-size:10.6px;line-height:20px;color:#333;font-weight:400;">BAG</div>
<div class="t" style="left:225px;top:540.0px;font-size:10.6px;line-height:20px;color:#333;font-weight:400;">NO.12</div>
<div class="t" style="left:143px;top:512.0px;font-size:10.6px;line-height:20px;color:#333;font-weight:400;">OFFICE</div>
<div class="t" style="left:143px;top:526.0px;font-size:10.6px;line-height:20px;color:#333;font-weight:400;">SUPPLIES &amp;</div>
<div class="t" style="left:143px;top:540.0px;font-size:10.6px;line-height:20px;color:#333;font-weight:400;">IT</div>
<div class="t" style="left:294px;top:526.0px;font-size:10.6px;line-height:20px;color:#333;font-weight:400;">EACH</div>
<div class="a" style="left:376px;top:524.0px;width:66px;height:24px;background:#8bc34a;"></div>
<div class="t" style="left:376px;top:526.0px;font-size:11.1px;line-height:20px;color:#333;font-weight:400;">Batch Item</div>
<div class="t" style="left:349px;width:300px;text-align:right;top:526.0px;font-size:11px;line-height:20px;color:#333;font-weight:400;">0</div>
<div class="a" style="left:0px;top:615px;width:877px;height:1px;background:#d9d9d9;"></div>
<div class="t" style="left:-195px;width:300px;text-align:right;top:579.0px;font-size:11.15px;line-height:20px;color:#333;font-weight:400;">13935</div>
<div class="t" style="left:225px;top:565.0px;font-size:10.6px;line-height:20px;color:#333;font-weight:400;">ZIPLOCK</div>
<div class="t" style="left:225px;top:579.0px;font-size:10.6px;line-height:20px;color:#333;font-weight:400;">BAG</div>
<div class="t" style="left:225px;top:593.0px;font-size:10.6px;line-height:20px;color:#333;font-weight:400;">NO.10</div>
<div class="t" style="left:143px;top:565.0px;font-size:10.6px;line-height:20px;color:#333;font-weight:400;">OFFICE</div>
<div class="t" style="left:143px;top:579.0px;font-size:10.6px;line-height:20px;color:#333;font-weight:400;">SUPPLIES &amp;</div>
<div class="t" style="left:143px;top:593.0px;font-size:10.6px;line-height:20px;color:#333;font-weight:400;">IT</div>
<div class="t" style="left:294px;top:579.0px;font-size:10.6px;line-height:20px;color:#333;font-weight:400;">EACH</div>
<div class="a" style="left:376px;top:577.0px;width:66px;height:24px;background:#8bc34a;"></div>
<div class="t" style="left:376px;top:579.0px;font-size:11.1px;line-height:20px;color:#333;font-weight:400;">Batch Item</div>
<div class="t" style="left:349px;width:300px;text-align:right;top:579.0px;font-size:11px;line-height:20px;color:#333;font-weight:400;">15</div>
<div class="a" style="left:0px;top:668px;width:877px;height:1px;background:#d9d9d9;"></div>
<div class="t" style="left:-195px;width:300px;text-align:right;top:632.0px;font-size:11.15px;line-height:20px;color:#333;font-weight:400;">13934</div>
<div class="t" style="left:225px;top:625.0px;font-size:10.6px;line-height:20px;color:#333;font-weight:400;">ZIPLOCK</div>
<div class="t" style="left:225px;top:639.0px;font-size:10.6px;line-height:20px;color:#333;font-weight:400;">BAG NO.9</div>
<div class="t" style="left:143px;top:618.0px;font-size:10.6px;line-height:20px;color:#333;font-weight:400;">OFFICE</div>
<div class="t" style="left:143px;top:632.0px;font-size:10.6px;line-height:20px;color:#333;font-weight:400;">SUPPLIES &amp;</div>
<div class="t" style="left:143px;top:646.0px;font-size:10.6px;line-height:20px;color:#333;font-weight:400;">IT</div>
<div class="t" style="left:294px;top:632.0px;font-size:10.6px;line-height:20px;color:#333;font-weight:400;">EACH</div>
<div class="a" style="left:376px;top:630.0px;width:66px;height:24px;background:#8bc34a;"></div>
<div class="t" style="left:376px;top:632.0px;font-size:11.1px;line-height:20px;color:#333;font-weight:400;">Batch Item</div>
<div class="t" style="left:349px;width:300px;text-align:right;top:632.0px;font-size:11px;line-height:20px;color:#333;font-weight:400;">15</div>
<div class="a" style="left:0px;top:735px;width:877px;height:1px;background:#d9d9d9;"></div>
<div class="t" style="left:-195px;width:300px;text-align:right;top:692.0px;font-size:11.15px;line-height:20px;color:#333;font-weight:400;">13930</div>
<div class="t" style="left:225px;top:671.0px;font-size:10.6px;line-height:20px;color:#333;font-weight:400;">WHATS...</div>
<div class="t" style="left:225px;top:685.0px;font-size:10.6px;line-height:20px;color:#333;font-weight:400;">BUSINESS</div>
<div class="t" style="left:225px;top:699.0px;font-size:10.6px;line-height:20px;color:#333;font-weight:400;">API</div>
<div class="t" style="left:225px;top:713.0px;font-size:10.6px;line-height:20px;color:#333;font-weight:400;">SERVICES</div>
<div class="t" style="left:143px;top:692.0px;font-size:10.6px;line-height:20px;color:#333;font-weight:400;">Default</div>
<div class="t" style="left:294px;top:692.0px;font-size:10.6px;line-height:20px;color:#333;font-weight:400;">EACH</div>
<div class="a" style="left:376px;top:690.0px;width:66px;height:24px;background:#bbdefb;"></div>
<div class="t" style="left:376px;top:692.0px;font-size:11.1px;line-height:20px;color:#222;font-weight:400;">Other Item</div>
<div class="t" style="left:349px;width:300px;text-align:right;top:692.0px;font-size:11px;line-height:20px;color:#333;font-weight:400;">15</div>
<div class="a" style="left:0px;top:802px;width:877px;height:1px;background:#d9d9d9;"></div>
<div class="t" style="left:-195px;width:300px;text-align:right;top:759.0px;font-size:11.15px;line-height:20px;color:#333;font-weight:400;">13916</div>
<div class="t" style="left:225px;top:738.0px;font-size:10.6px;line-height:20px;color:#333;font-weight:400;">MEBO</div>
<div class="t" style="left:225px;top:752.0px;font-size:10.6px;line-height:20px;color:#333;font-weight:400;">0.25%</div>
<div class="t" style="left:225px;top:766.0px;font-size:10.6px;line-height:20px;color:#333;font-weight:400;">OINTME...</div>
<div class="t" style="left:225px;top:780.0px;font-size:10.6px;line-height:20px;color:#333;font-weight:400;">15GM</div>
<div class="t" style="left:143px;top:759.0px;font-size:10.6px;line-height:20px;color:#333;font-weight:400;">MEDICINES</div>
<div class="t" style="left:294px;top:759.0px;font-size:10.6px;line-height:20px;color:#333;font-weight:400;">EACH</div>
<div class="a" style="left:376px;top:757.0px;width:66px;height:24px;background:#8bc34a;"></div>
<div class="t" style="left:376px;top:759.0px;font-size:11.1px;line-height:20px;color:#333;font-weight:400;">Batch Item</div>
<div class="t" style="left:211px;width:300px;text-align:right;top:759.0px;font-size:11px;line-height:20px;color:#333;font-weight:400;">45.00</div>
<div class="t" style="left:349px;width:300px;text-align:right;top:759.0px;font-size:11px;line-height:20px;color:#333;font-weight:400;">0</div>
<div class="a" style="left:0px;top:869px;width:877px;height:1px;background:#d9d9d9;"></div>
<div class="t" style="left:-195px;width:300px;text-align:right;top:826.0px;font-size:11.15px;line-height:20px;color:#333;font-weight:400;">13915</div>
<div class="t" style="left:225px;top:805.0px;font-size:10.6px;line-height:20px;color:#333;font-weight:400;">OPTIFU...</div>
<div class="t" style="left:225px;top:819.0px;font-size:10.6px;line-height:20px;color:#333;font-weight:400;">1% EYE</div>
<div class="t" style="left:225px;top:833.0px;font-size:10.6px;line-height:20px;color:#333;font-weight:400;">DROPS</div>
<div class="t" style="left:225px;top:847.0px;font-size:10.6px;line-height:20px;color:#333;font-weight:400;">5GM</div>
<div class="t" style="left:143px;top:826.0px;font-size:10.6px;line-height:20px;color:#333;font-weight:400;">MEDICINES</div>
<div class="t" style="left:294px;top:826.0px;font-size:10.6px;line-height:20px;color:#333;font-weight:400;">EACH</div>
<div class="a" style="left:376px;top:824.0px;width:66px;height:24px;background:#8bc34a;"></div>
<div class="t" style="left:376px;top:826.0px;font-size:11.1px;line-height:20px;color:#333;font-weight:400;">Batch Item</div>
<div class="t" style="left:211px;width:300px;text-align:right;top:826.0px;font-size:11px;line-height:20px;color:#333;font-weight:400;">11.25</div>
<div class="t" style="left:349px;width:300px;text-align:right;top:826.0px;font-size:11px;line-height:20px;color:#333;font-weight:400;">0</div>
<div class="a" style="left:0px;top:922px;width:877px;height:1px;background:#d9d9d9;"></div>
<div class="t" style="left:-195px;width:300px;text-align:right;top:886.0px;font-size:11.15px;line-height:20px;color:#333;font-weight:400;">13914</div>
<div class="t" style="left:225px;top:872.0px;font-size:10.6px;line-height:20px;color:#333;font-weight:400;">CLORAC...</div>
<div class="t" style="left:225px;top:886.0px;font-size:10.6px;line-height:20px;color:#333;font-weight:400;">500MG</div>
<div class="t" style="left:225px;top:900.0px;font-size:10.6px;line-height:20px;color:#333;font-weight:400;">16CAPS...</div>
<div class="t" style="left:143px;top:886.0px;font-size:10.6px;line-height:20px;color:#333;font-weight:400;">MEDICINES</div>
<div class="t" style="left:294px;top:886.0px;font-size:10.6px;line-height:20px;color:#333;font-weight:400;">EACH</div>
<div class="a" style="left:376px;top:884.0px;width:66px;height:24px;background:#8bc34a;"></div>
<div class="t" style="left:376px;top:886.0px;font-size:11.1px;line-height:20px;color:#333;font-weight:400;">Batch Item</div>
<div class="t" style="left:349px;width:300px;text-align:right;top:886.0px;font-size:11px;line-height:20px;color:#333;font-weight:400;">0</div>
<div class="a" style="left:0px;top:975px;width:877px;height:1px;background:#d9d9d9;"></div>
<div class="t" style="left:-195px;width:300px;text-align:right;top:939.0px;font-size:11.15px;line-height:20px;color:#333;font-weight:400;">13913</div>
<div class="t" style="left:225px;top:925.0px;font-size:10.6px;line-height:20px;color:#333;font-weight:400;">ZERTAZI...</div>
<div class="t" style="left:225px;top:939.0px;font-size:10.6px;line-height:20px;color:#333;font-weight:400;">10MG</div>
<div class="t" style="left:225px;top:953.0px;font-size:10.6px;line-height:20px;color:#333;font-weight:400;">10TAB</div>
<div class="t" style="left:143px;top:939.0px;font-size:10.6px;line-height:20px;color:#333;font-weight:400;">MEDICINES</div>
<div class="t" style="left:294px;top:939.0px;font-size:10.6px;line-height:20px;color:#333;font-weight:400;">EACH</div>
<div class="a" style="left:376px;top:937.0px;width:66px;height:24px;background:#8bc34a;"></div>
<div class="t" style="left:376px;top:939.0px;font-size:11.1px;line-height:20px;color:#333;font-weight:400;">Batch Item</div>
<div class="t" style="left:349px;width:300px;text-align:right;top:939.0px;font-size:11px;line-height:20px;color:#333;font-weight:400;">0</div>
<div class="a" style="left:0px;top:1042px;width:877px;height:1px;background:#d9d9d9;"></div>
<div class="t" style="left:-195px;width:300px;text-align:right;top:999.0px;font-size:11.15px;line-height:20px;color:#333;font-weight:400;">13912</div>
<div class="t" style="left:225px;top:978.0px;font-size:10.6px;line-height:20px;color:#333;font-weight:400;">RIAZOLIN</div>
<div class="t" style="left:225px;top:992.0px;font-size:10.6px;line-height:20px;color:#333;font-weight:400;">EYE</div>
<div class="t" style="left:225px;top:1006.0px;font-size:10.6px;line-height:20px;color:#333;font-weight:400;">DROPS</div>
<div class="t" style="left:225px;top:1020.0px;font-size:10.6px;line-height:20px;color:#333;font-weight:400;">15ML</div>
<div class="t" style="left:143px;top:999.0px;font-size:10.6px;line-height:20px;color:#333;font-weight:400;">MEDICINES</div>
<div class="t" style="left:294px;top:999.0px;font-size:10.6px;line-height:20px;color:#333;font-weight:400;">EACH</div>
<div class="a" style="left:376px;top:997.0px;width:66px;height:24px;background:#8bc34a;"></div>
<div class="t" style="left:376px;top:999.0px;font-size:11.1px;line-height:20px;color:#333;font-weight:400;">Batch Item</div>
<div class="t" style="left:211px;width:300px;text-align:right;top:999.0px;font-size:11px;line-height:20px;color:#333;font-weight:400;">16.65</div>
<div class="t" style="left:349px;width:300px;text-align:right;top:999.0px;font-size:11px;line-height:20px;color:#333;font-weight:400;">0</div>
<div class="a" style="left:0px;top:1095px;width:877px;height:1px;background:#d9d9d9;"></div>
<div class="t" style="left:-195px;width:300px;text-align:right;top:1059.0px;font-size:11.15px;line-height:20px;color:#333;font-weight:400;">13911</div>
<div class="t" style="left:225px;top:1045.0px;font-size:10.6px;line-height:20px;color:#333;font-weight:400;">GAVISC...</div>
<div class="t" style="left:225px;top:1059.0px;font-size:10.6px;line-height:20px;color:#333;font-weight:400;">SUSPEN...</div>
<div class="t" style="left:225px;top:1073.0px;font-size:10.6px;line-height:20px;color:#333;font-weight:400;">200ML</div>
<div class="t" style="left:143px;top:1059.0px;font-size:10.6px;line-height:20px;color:#333;font-weight:400;">MEDICINES</div>
<div class="t" style="left:294px;top:1059.0px;font-size:10.6px;line-height:20px;color:#333;font-weight:400;">EACH</div>
<div class="a" style="left:376px;top:1057.0px;width:66px;height:24px;background:#8bc34a;"></div>
<div class="t" style="left:376px;top:1059.0px;font-size:11.1px;line-height:20px;color:#333;font-weight:400;">Batch Item</div>
<div class="t" style="left:211px;width:300px;text-align:right;top:1059.0px;font-size:11px;line-height:20px;color:#333;font-weight:400;">15.20</div>
<div class="t" style="left:349px;width:300px;text-align:right;top:1059.0px;font-size:11px;line-height:20px;color:#333;font-weight:400;">0</div>
<div class="a" style="left:0px;top:1148px;width:877px;height:1px;background:#d9d9d9;"></div>
<div class="t" style="left:-195px;width:300px;text-align:right;top:1112.0px;font-size:11.15px;line-height:20px;color:#333;font-weight:400;">13910</div>
<div class="t" style="left:225px;top:1098.0px;font-size:10.6px;line-height:20px;color:#333;font-weight:400;">BENOX</div>
<div class="t" style="left:225px;top:1112.0px;font-size:10.6px;line-height:20px;color:#333;font-weight:400;">0.4% EYE</div>
<div class="t" style="left:225px;top:1126.0px;font-size:10.6px;line-height:20px;color:#333;font-weight:400;">DROPS</div>
<div class="t" style="left:143px;top:1112.0px;font-size:10.6px;line-height:20px;color:#333;font-weight:400;">MEDICINES</div>
<div class="t" style="left:294px;top:1112.0px;font-size:10.6px;line-height:20px;color:#333;font-weight:400;">EACH</div>
<div class="a" style="left:376px;top:1110.0px;width:66px;height:24px;background:#8bc34a;"></div>
<div class="t" style="left:376px;top:1112.0px;font-size:11.1px;line-height:20px;color:#333;font-weight:400;">Batch Item</div>
<div class="t" style="left:349px;width:300px;text-align:right;top:1112.0px;font-size:11px;line-height:20px;color:#333;font-weight:400;">0</div>
<div class="t" style="left:832px;top:1105.0px;font-size:10.8px;line-height:20px;color:#333;font-weight:400;">Benoxinate</div>
<div class="t" style="left:832px;top:1119.0px;font-size:10.8px;line-height:20px;color:#333;font-weight:400;">Hydrochloride</div>
<div class="a" style="left:0px;top:1201px;width:877px;height:1px;background:#d9d9d9;"></div>
<div class="t" style="left:-195px;width:300px;text-align:right;top:1165.0px;font-size:11.15px;line-height:20px;color:#333;font-weight:400;">13909</div>
<div class="t" style="left:225px;top:1151.0px;font-size:10.6px;line-height:20px;color:#333;font-weight:400;">GUAPHA...</div>
<div class="t" style="left:225px;top:1165.0px;font-size:10.6px;line-height:20px;color:#333;font-weight:400;">SYRUP</div>
<div class="t" style="left:225px;top:1179.0px;font-size:10.6px;line-height:20px;color:#333;font-weight:400;">100ML</div>
<div class="t" style="left:143px;top:1165.0px;font-size:10.6px;line-height:20px;color:#333;font-weight:400;">MEDICINES</div>
<div class="t" style="left:294px;top:1165.0px;font-size:10.6px;line-height:20px;color:#333;font-weight:400;">EACH</div>
<div class="a" style="left:376px;top:1163.0px;width:66px;height:24px;background:#8bc34a;"></div>
<div class="t" style="left:376px;top:1165.0px;font-size:11.1px;line-height:20px;color:#333;font-weight:400;">Batch Item</div>
<div class="t" style="left:349px;width:300px;text-align:right;top:1165.0px;font-size:11px;line-height:20px;color:#333;font-weight:400;">0</div>
<div class="a" style="left:0px;top:1268px;width:877px;height:1px;background:#d9d9d9;"></div>
<div class="t" style="left:-195px;width:300px;text-align:right;top:1225.0px;font-size:11.15px;line-height:20px;color:#333;font-weight:400;">13908</div>
<div class="t" style="left:225px;top:1204.0px;font-size:10.6px;line-height:20px;color:#333;font-weight:400;">STREPW...</div>
<div class="t" style="left:225px;top:1218.0px;font-size:10.6px;line-height:20px;color:#333;font-weight:400;">LOZENG...</div>
<div class="t" style="left:225px;top:1232.0px;font-size:10.6px;line-height:20px;color:#333;font-weight:400;">ORANGE</div>
<div class="t" style="left:225px;top:1246.0px;font-size:10.6px;line-height:20px;color:#333;font-weight:400;">24'S</div>
<div class="t" style="left:143px;top:1225.0px;font-size:10.6px;line-height:20px;color:#333;font-weight:400;">MEDICINES</div>
<div class="t" style="left:294px;top:1225.0px;font-size:10.6px;line-height:20px;color:#333;font-weight:400;">EACH</div>
<div class="a" style="left:376px;top:1223.0px;width:66px;height:24px;background:#8bc34a;"></div>
<div class="t" style="left:376px;top:1225.0px;font-size:11.1px;line-height:20px;color:#333;font-weight:400;">Batch Item</div>
<div class="t" style="left:349px;width:300px;text-align:right;top:1225.0px;font-size:11px;line-height:20px;color:#333;font-weight:400;">15</div>
<div class="a" style="left:0px;top:1335px;width:877px;height:1px;background:#d9d9d9;"></div>
<div class="t" style="left:-195px;width:300px;text-align:right;top:1292.0px;font-size:11.15px;line-height:20px;color:#333;font-weight:400;">13907</div>
<div class="t" style="left:225px;top:1271.0px;font-size:10.6px;line-height:20px;color:#333;font-weight:400;">APISAL</div>
<div class="t" style="left:225px;top:1285.0px;font-size:10.6px;line-height:20px;color:#333;font-weight:400;">NASAL</div>
<div class="t" style="left:225px;top:1299.0px;font-size:10.6px;line-height:20px;color:#333;font-weight:400;">SPRAY</div>
<div class="t" style="left:225px;top:1313.0px;font-size:10.6px;line-height:20px;color:#333;font-weight:400;">15ML</div>
<div class="t" style="left:143px;top:1292.0px;font-size:10.6px;line-height:20px;color:#333;font-weight:400;">MEDICINES</div>
<div class="t" style="left:294px;top:1292.0px;font-size:10.6px;line-height:20px;color:#333;font-weight:400;">EACH</div>
<div class="a" style="left:376px;top:1290.0px;width:66px;height:24px;background:#8bc34a;"></div>
<div class="t" style="left:376px;top:1292.0px;font-size:11.1px;line-height:20px;color:#333;font-weight:400;">Batch Item</div>
<div class="t" style="left:211px;width:300px;text-align:right;top:1292.0px;font-size:11px;line-height:20px;color:#333;font-weight:400;">21.90</div>
<div class="t" style="left:349px;width:300px;text-align:right;top:1292.0px;font-size:11px;line-height:20px;color:#333;font-weight:400;">0</div>
<div class="a" style="left:0px;top:1416px;width:877px;height:1px;background:#d9d9d9;"></div>
<div class="t" style="left:-195px;width:300px;text-align:right;top:1366.0px;font-size:11.15px;line-height:20px;color:#333;font-weight:400;">13906</div>
<div class="t" style="left:225px;top:1338.0px;font-size:10.6px;line-height:20px;color:#333;font-weight:400;">APISAL</div>
<div class="t" style="left:225px;top:1352.0px;font-size:10.6px;line-height:20px;color:#333;font-weight:400;">0.9%</div>
<div class="t" style="left:225px;top:1366.0px;font-size:10.6px;line-height:20px;color:#333;font-weight:400;">EYE&amp;NA...</div>
<div class="t" style="left:225px;top:1380.0px;font-size:10.6px;line-height:20px;color:#333;font-weight:400;">DROPS</div>
<div class="t" style="left:225px;top:1394.0px;font-size:10.6px;line-height:20px;color:#333;font-weight:400;">15ML</div>
<div class="t" style="left:143px;top:1366.0px;font-size:10.6px;line-height:20px;color:#333;font-weight:400;">MEDICINES</div>
<div class="t" style="left:294px;top:1366.0px;font-size:10.6px;line-height:20px;color:#333;font-weight:400;">EACH</div>
<div class="a" style="left:376px;top:1364.0px;width:66px;height:24px;background:#8bc34a;"></div>
<div class="t" style="left:376px;top:1366.0px;font-size:11.1px;line-height:20px;color:#333;font-weight:400;">Batch Item</div>
<div class="t" style="left:211px;width:300px;text-align:right;top:1366.0px;font-size:11px;line-height:20px;color:#333;font-weight:400;">5.70</div>
<div class="t" style="left:349px;width:300px;text-align:right;top:1366.0px;font-size:11px;line-height:20px;color:#333;font-weight:400;">0</div>
<div class="a" style="left:0px;top:1483px;width:877px;height:1px;background:#d9d9d9;"></div>
<div class="t" style="left:-195px;width:300px;text-align:right;top:1440.0px;font-size:11.15px;line-height:20px;color:#333;font-weight:400;">13905</div>
<div class="t" style="left:225px;top:1419.0px;font-size:10.6px;line-height:20px;color:#333;font-weight:400;">AVOCOM</div>
<div class="t" style="left:225px;top:1433.0px;font-size:10.6px;line-height:20px;color:#333;font-weight:400;">CREAM</div>
<div class="t" style="left:225px;top:1447.0px;font-size:10.6px;line-height:20px;color:#333;font-weight:400;">0.1%</div>
<div class="t" style="left:225px;top:1461.0px;font-size:10.6px;line-height:20px;color:#333;font-weight:400;">30GM</div>
<div class="t" style="left:143px;top:1440.0px;font-size:10.6px;line-height:20px;color:#333;font-weight:400;">MEDICINES</div>
<div class="t" style="left:294px;top:1440.0px;font-size:10.6px;line-height:20px;color:#333;font-weight:400;">EACH</div>
<div class="a" style="left:376px;top:1438.0px;width:66px;height:24px;background:#8bc34a;"></div>
<div class="t" style="left:376px;top:1440.0px;font-size:11.1px;line-height:20px;color:#333;font-weight:400;">Batch Item</div>
<div class="t" style="left:349px;width:300px;text-align:right;top:1440.0px;font-size:11px;line-height:20px;color:#333;font-weight:400;">0</div>
<div class="a" style="left:134px;top:148px;width:1px;height:1300px;background:#d9d9d9;"></div>
<div class="a" style="left:216px;top:148px;width:1px;height:1300px;background:#d9d9d9;"></div>
<div class="a" style="left:285px;top:148px;width:1px;height:1300px;background:#d9d9d9;"></div>
<div class="a" style="left:367px;top:148px;width:1px;height:1300px;background:#d9d9d9;"></div>
<div class="a" style="left:449px;top:148px;width:1px;height:1300px;background:#d9d9d9;"></div>
<div class="a" style="left:518px;top:148px;width:1px;height:1300px;background:#d9d9d9;"></div>
<div class="a" style="left:587px;top:148px;width:1px;height:1300px;background:#d9d9d9;"></div>
<div class="a" style="left:656px;top:148px;width:1px;height:1300px;background:#d9d9d9;"></div>
<div class="a" style="left:725px;top:148px;width:1px;height:1300px;background:#d9d9d9;"></div>
<div class="a" style="left:823px;top:148px;width:1px;height:1300px;background:#d9d9d9;"></div>
</div>
<div class="a" style="left:1129px;top:106px;width:7px;height:862px;background:#a8a8a8;"></div>
<div class="a" style="left:260px;top:1433px;width:877px;height:7px;background:#f1f1f1;"></div>
<div class="a" style="left:260px;top:1433px;width:502px;height:7px;background:#a8a8a8;"></div>
<div class="a" style="left:1137px;top:0px;width:1px;height:1440px;background:#d0d0d0;"></div>
<div class="a" style="left:1138px;top:0px;width:1422px;height:111px;background:#0072c6;"></div>
<svg class="a" style="left:1138px;top:0" width="110" height="111" viewBox="0 0 110 111"><path fill="#338dd4" d="M0 0H96a4 4 0 0 1 4 4V38L90 52V111H0z"/><rect fill="#0072c6" x="0" y="5" width="80" height="30"/><path fill="#0072c6" d="M0 85H30V100a5 5 0 0 1 -5 5H0z"/></svg>
<svg class="a" style="left:1154px;top:16px;" width="24" height="24" viewBox="0 0 24 24"><path fill="#fff" d="M19 6.41L17.59 5 12 10.59 6.41 5 5 6.41 10.59 12 5 17.59 6.41 19 12 13.41 17.59 19 19 17.59 13.41 12z"/></svg>
<svg class="a" style="left:1154px;top:61px" width="40" height="40" viewBox="0 0 40 40"><path fill="#f3f3f3" d="M2 0H38a2 2 0 0 1 2 2V11a2 2 0 0 1 -2 2H2a2 2 0 0 1 -2 -2V2a2 2 0 0 1 2 -2zM4.5 4V10H36V4z"/><path fill="#f3f3f3" d="M2 13H38.5V36a4 4 0 0 1 -4 4H6a4 4 0 0 1 -4 -4zM14 20V24H26V20z"/></svg>
<div class="t" style="left:1205px;top:53.5px;font-size:10.65px;line-height:20px;color:#f3f3f3;font-weight:400;">REVIEW</div>
<div class="t" style="left:1205px;top:75.5px;font-size:23.3px;line-height:20px;color:#f3f3f3;font-weight:400;">13953</div>
<div class="a" style="left:2356px;top:5px;width:49px;height:45px;border-radius:14px;background:#f3f3f3;box-shadow:0 2px 8px rgba(0,0,0,.25)"></div>
<svg class="a" style="left:2373px;top:20px;" width="15" height="15" viewBox="0 0 24 24"><path fill="#7e57c2" d="M12 22c1.1 0 2-.9 2-2h-4c0 1.1.9 2 2 2zm6-6v-5c0-3.07-1.64-5.64-4.5-6.32V4c0-.83-.67-1.5-1.5-1.5s-1.5.67-1.5 1.5v.68C7.63 5.36 6 7.92 6 11v5l-2 2v1h16v-1l-2-2zm-2 1H8v-6c0-2.48 1.51-4.5 4-4.5s4 2.02 4 4.5v6z"/></svg>
<div class="a" style="left:2374px;top:0px;width:36px;height:23px;border-radius:50%;background:#c97a3a"></div>
<div class="t" style="left:2242px;width:300px;text-align:center;top:2.0px;font-size:11px;line-height:20px;color:#fff;font-weight:700;">0</div>
<div class="t" style="left:2405px;top:18.0px;font-size:11px;line-height:20px;color:#fff;font-weight:700;">CEL</div>
<svg class="a" style="left:2451px;top:16px;" width="22" height="22" viewBox="0 0 24 24"><path fill="#fff" d="M9 16.17L4.83 12l-1.42 1.41L9 19 21 7l-1.41-1.41z"/></svg>
<div class="t" style="left:2478px;top:18.0px;font-size:11px;line-height:20px;color:#fff;font-weight:700;">SAVE</div>
<svg class="a" style="left:2523px;top:16px;" width="24" height="24" viewBox="0 0 24 24"><path fill="#fff" d="M12 8c1.1 0 2-.9 2-2s-.9-2-2-2-2 .9-2 2 .9 2 2 2zm0 2c-1.1 0-2 .9-2 2s.9 2 2 2 2-.9 2-2-.9-2-2-2zm0 6c-1.1 0-2 .9-2 2s.9 2 2 2 2-.9 2-2-.9-2-2-2z"/></svg>
<div class="a" style="left:1138px;top:111px;width:1422px;height:44px;background:#f0f0f0;"></div>
<div class="a" style="left:1138px;top:155px;width:1422px;height:1px;background:#d9d9d9;"></div>
<div class="t" style="left:1154px;top:129px;font-size:12.1px;line-height:20px;font-weight:700;color:#0d1fc2">Item ID: <span style="color:#888;font-size:13.2px">13953</span></div>
<div class="t" style="left:1259px;top:129px;font-size:12.1px;line-height:20px;font-weight:700;color:#0d1fc2">Description:</div>
<div class="t" style="left:1349px;top:129px;font-size:12.1px;line-height:20px;font-weight:700;color:#0d1fc2">Unit Price: <span style="color:#888;font-size:13.2px">85.00</span></div>
<div class="t" style="left:1460px;top:129px;font-size:12.1px;line-height:20px;font-weight:700;color:#0d1fc2">VAT: <span style="color:#888;font-size:13.4px">15</span></div>
<div class="t" style="left:1519px;top:129px;font-size:12.1px;line-height:20px;font-weight:700;color:#0d1fc2">Discount:</div>
<div class="t" style="left:1154px;top:164.0px;font-size:12px;line-height:20px;color:#777;font-weight:400;">Category <svg width="8" height="8" viewBox="0 0 8 8" style="vertical-align:0px;margin-left:1px"><path stroke="currentColor" stroke-width="1.1" d="M4 0V8M0 4H8M1.2 1.2L6.8 6.8M6.8 1.2L1.2 6.8"/></svg></div>
<div class="t" style="left:1154px;top:185.0px;font-size:10.2px;line-height:20px;color:#222;font-weight:400;">RIMS SERVICES</div>
<svg class="a" style="left:1238.4px;top:187.4px;" width="18" height="18" viewBox="0 0 24 24"><path fill="#111" d="M7 4.5L4.5 7 9.5 12l-5 5L7 19.5l7.5-7.5z"/></svg>
<div class="t" style="left:1493px;top:164.0px;font-size:12px;line-height:20px;color:#777;font-weight:400;">Price</div>
<div class="t" style="left:1493px;top:184.0px;font-size:11px;line-height:20px;color:#222;font-weight:400;">85.00</div>
<div class="t" style="left:1832px;top:164.0px;font-size:12px;line-height:20px;color:#777;font-weight:400;">ZATCA Code</div>
<div class="t" style="left:1832px;top:184.0px;font-size:11px;line-height:20px;color:#666;font-weight:400;">S</div>
<div class="t" style="left:2172px;top:164.0px;font-size:12px;line-height:20px;color:#777;font-weight:400;">Gross</div>
<div class="a" style="left:1138px;top:208px;width:1422px;height:1px;background:#d9d9d9;"></div>
<div class="t" style="left:1154px;top:213.0px;font-size:12px;line-height:20px;color:#111;font-weight:700;">Item Name <svg width="8" height="8" viewBox="0 0 8 8" style="vertical-align:0px;margin-left:1px"><path stroke="currentColor" stroke-width="1.1" d="M4 0V8M0 4H8M1.2 1.2L6.8 6.8M6.8 1.2L1.2 6.8"/></svg></div>
<div class="t" style="left:1154px;top:237px;font-size:10.6px;line-height:14px;color:#0d1fc2;font-weight:700">MAN POWER SERVICE- MOH APPROVED DOCTOR <span style="font-weight:400">خدمة تأجير</span><br><span style="font-weight:400">طبية عامة</span></div>
<div class="t" style="left:1493px;top:213.0px;font-size:12px;line-height:20px;color:#777;font-weight:400;">Discount</div>
<div class="t" style="left:1832px;top:213.0px;font-size:12px;line-height:20px;color:#777;font-weight:400;">GTIN</div>
<div class="a" style="left:1138px;top:273px;width:1422px;height:1px;background:#d9d9d9;"></div>
<div class="t" style="left:1154px;top:278.0px;font-size:12px;line-height:20px;color:#777;font-weight:400;">Item Description</div>
<div class="t" style="left:1493px;top:278.0px;font-size:12px;line-height:20px;color:#777;font-weight:400;">VAT</div>
<div class="t" style="left:1493px;top:298.5px;font-size:11px;line-height:20px;color:#222;font-weight:400;">15</div>
<svg class="a" style="left:1509.2px;top:300px;" width="18" height="18" viewBox="0 0 24 24"><path fill="#111" d="M7 4.5L4.5 7 9.5 12l-5 5L7 19.5l7.5-7.5z"/></svg>
<div class="t" style="left:1832px;top:278.0px;font-size:12px;line-height:20px;color:#777;font-weight:400;">Generic Name</div>
<div class="t" style="left:1832px;top:298.5px;font-size:11px;line-height:20px;color:#777;font-weight:400;font-style:italic">(select)</div>
<svg class="a" style="left:1873.6px;top:301px;" width="18" height="18" viewBox="0 0 24 24"><path fill="#111" d="M7 4.5L4.5 7 9.5 12l-5 5L7 19.5l7.5-7.5z"/></svg>
<div class="a" style="left:1138px;top:323px;width:1422px;height:1px;background:#d9d9d9;"></div>
<div class="t" style="left:1154px;top:332.0px;font-size:12px;line-height:20px;color:#777;font-weight:400;">Item Type <svg width="8" height="8" viewBox="0 0 8 8" style="vertical-align:0px;margin-left:1px"><path stroke="currentColor" stroke-width="1.1" d="M4 0V8M0 4H8M1.2 1.2L6.8 6.8M6.8 1.2L1.2 6.8"/></svg></div>
<div class="a" style="left:1156px;top:358px;width:22px;height:22px;border-radius:50%;border:2px solid #9e9e9e;background:#fff"></div>
<div class="t" style="left:1187px;top:359.0px;font-size:11.3px;line-height:20px;color:#222;font-weight:400;">Batch Item</div>
<div class="a" style="left:1259px;top:358px;width:22px;height:22px;border-radius:50%;border:2px solid #0a72c8;background:#fff"></div>
<div class="a" style="left:1263px;top:362px;width:14px;height:14px;border-radius:50%;background:#0a72c8"></div>
<div class="t" style="left:1290px;top:359.0px;font-size:11.3px;line-height:20px;color:#222;font-weight:400;">Other Item</div>
<div class="t" style="left:1844px;top:332.0px;font-size:12px;line-height:20px;color:#777;font-weight:400;">Service Type</div>
<div class="t" style="left:1844px;top:352.5px;font-size:11px;line-height:20px;color:#111;font-weight:400;">RIMS Services</div>
<svg class="a" style="left:1918.5px;top:351.6px;" width="24" height="24" viewBox="0 0 24 24"><path fill="#111" d="M7 11L12 6l5 5zM7 12l5 5 5-5z"/></svg>
<div class="a" style="left:1138px;top:398px;width:1422px;height:1px;background:#d9d9d9;"></div>
<div class="a" style="left:1138px;top:411px;width:1422px;height:1px;background:#d9d9d9;"></div>
<div class="a" style="left:1138px;top:412px;width:1422px;height:34px;background:#f0f0f0;"></div>
<div class="a" style="left:1138px;top:446px;width:1422px;height:1px;background:#d9d9d9;"></div>
<div class="t" style="left:1154px;top:419.0px;font-size:11.3px;line-height:20px;color:#444;font-weight:400;">AUDIT INFORMATION</div>
<svg class="a" style="left:2523px;top:417px;" width="24" height="24" viewBox="0 0 24 24"><path fill="#9a9a9a" d="M16.59 8.59L12 13.17 7.41 8.59 6 10l6 6 6-6z"/></svg>
<div class="a" style="left:1138px;top:458px;width:1422px;height:1px;background:#d9d9d9;"></div>
<div class="a" style="left:1138px;top:459px;width:1422px;height:34px;background:#f0f0f0;"></div>
<div class="a" style="left:1138px;top:493px;width:1422px;height:1px;background:#d9d9d9;"></div>
<div class="t" style="left:1154px;top:466.0px;font-size:11.3px;line-height:20px;color:#444;font-weight:400;">STOCK ON HAND</div>
<svg class="a" style="left:2523px;top:464px;" width="24" height="24" viewBox="0 0 24 24"><path fill="#9a9a9a" d="M12 8l-6 6 1.41 1.41L12 10.83l4.59 4.58L18 14z"/></svg>
<div class="t" style="left:1153px;top:508.0px;font-size:10.6px;line-height:20px;color:#444;font-weight:400;">ITEM WISE STOCK</div>
<svg class="a" style="left:1246px;top:508px;" width="20" height="20" viewBox="0 0 24 24"><path fill="#707070" d="M7 10l5 5 5-5z"/></svg>
<svg class="a" style="left:1269px;top:506px;" width="24" height="24" viewBox="0 0 24 24"><path fill="#707068" d="M12 8c1.1 0 2-.9 2-2s-.9-2-2-2-2 .9-2 2 .9 2 2 2zm0 2c-1.1 0-2 .9-2 2s.9 2 2 2 2-.9 2-2-.9-2-2-2zm0 6c-1.1 0-2 .9-2 2s.9 2 2 2 2-.9 2-2-.9-2-2-2z"/></svg>
<svg class="a" style="left:1308px;top:506px;" width="24" height="24" viewBox="0 0 24 24"><path fill="#707068" d="M19 8H5c-1.66 0-3 1.34-3 3v6h4v4h12v-4h4v-6c0-1.66-1.34-3-3-3zm-3 11H8v-5h8v5zm3-7c-.55 0-1-.45-1-1s.45-1 1-1 1 .45 1 1-.45 1-1 1zm-1-9H6v4h12V3z"/></svg>
<div class="t" style="left:1336px;top:508.5px;font-size:10.3px;line-height:20px;color:#444;font-weight:400;">PRINT REPORT</div>
<div class="t" style="left:1435px;top:508.0px;font-size:10.6px;line-height:20px;color:#444;font-weight:400;">ACTIONS</div>
<svg class="a" style="left:1481px;top:508px;" width="20" height="20" viewBox="0 0 24 24"><path fill="#707070" d="M7 10l5 5 5-5z"/></svg>
<div class="t" style="left:1517px;top:508.0px;font-size:10.6px;line-height:20px;color:#444;font-weight:400;">REPORT</div>
<svg class="a" style="left:1558.5px;top:508px;" width="20" height="20" viewBox="0 0 24 24"><path fill="#707070" d="M7 10l5 5 5-5z"/></svg>
<div class="t" style="left:1154px;top:541.5px;font-size:11.3px;line-height:20px;color:#333;font-weight:400;">no records found.</div>
<div class="a" style="left:1138px;top:627px;width:1422px;height:1px;background:#d9d9d9;"></div>
<div class="a" style="left:1138px;top:637px;width:1422px;height:1px;background:#d9d9d9;"></div>
<div class="a" style="left:1138px;top:649px;width:1422px;height:1px;background:#d9d9d9;"></div>
<div class="a" style="left:1138px;top:650px;width:1422px;height:34px;background:#f0f0f0;"></div>
<div class="a" style="left:1138px;top:684px;width:1422px;height:1px;background:#d9d9d9;"></div>
<div class="t" style="left:1154px;top:657.0px;font-size:11.3px;line-height:20px;color:#444;font-weight:400;">MIN MAX PLANNING PARAMETER</div>
<svg class="a" style="left:2523px;top:655px;" width="24" height="24" viewBox="0 0 24 24"><path fill="#9a9a9a" d="M12 8l-6 6 1.41 1.41L12 10.83l4.59 4.58L18 14z"/></svg>
<div class="t" style="left:1153px;top:699.0px;font-size:10.6px;line-height:20px;color:#444;font-weight:400;">INVENTORY MIN-MAX</div>
<svg class="a" style="left:1264px;top:699px;" width="20" height="20" viewBox="0 0 24 24"><path fill="#707070" d="M7 10l5 5 5-5z"/></svg>
<svg class="a" style="left:1288px;top:697px;" width="24" height="24" viewBox="0 0 24 24"><path fill="#707068" d="M12 8c1.1 0 2-.9 2-2s-.9-2-2-2-2 .9-2 2 .9 2 2 2zm0 2c-1.1 0-2 .9-2 2s.9 2 2 2 2-.9 2-2-.9-2-2-2zm0 6c-1.1 0-2 .9-2 2s.9 2 2 2 2-.9 2-2-.9-2-2-2z"/></svg>
<svg class="a" style="left:1327px;top:697px;" width="23" height="23" viewBox="0 0 24 24"><path fill="#707068" d="M19 13h-6v6h-2v-6H5v-2h6V5h2v6h6v2z"/></svg>
<div class="t" style="left:1355px;top:699.0px;font-size:10.6px;line-height:20px;color:#444;font-weight:400;">NEW</div>
<svg class="a" style="left:1402px;top:698px;" width="23" height="23" viewBox="0 0 24 24"><path fill="#707068" d="M21 10.12h-6.78l2.74-2.82c-2.73-2.7-7.15-2.8-9.88-.1-2.73 2.71-2.73 7.08 0 9.79s7.15 2.71 9.88 0C18.32 15.65 19 14.08 19 12.1h2c0 1.98-.88 4.55-2.64 6.29-3.51 3.48-9.21 3.48-12.720 0-3.5-3.47-3.53-9.11-.02-12.58s9.14-3.47 12.65 0L21 3v7.12zM12.5 8v4.25l3.5 2.08-.72 1.21L11 13V8h1.5z"/></svg>
<div class="t" style="left:1431px;top:699.0px;font-size:10.6px;line-height:20px;color:#444;font-weight:400;">AUTO UPDATE MIN/MAX</div>
<div class="t" style="left:1580px;top:699.0px;font-size:10.6px;line-height:20px;color:#444;font-weight:400;">ACTIONS</div>
<svg class="a" style="left:1626px;top:699px;" width="20" height="20" viewBox="0 0 24 24"><path fill="#707070" d="M7 10l5 5 5-5z"/></svg>
<div class="t" style="left:1661px;top:699.0px;font-size:10.6px;line-height:20px;color:#444;font-weight:400;">REPORT</div>
<svg class="a" style="left:1703.5px;top:699px;" width="20" height="20" viewBox="0 0 24 24"><path fill="#707070" d="M7 10l5 5 5-5z"/></svg>
<div class="t" style="left:1154px;top:732.0px;font-size:11.3px;line-height:20px;color:#333;font-weight:400;">no records found.</div>
<div class="a" style="left:1138px;top:820px;width:1422px;height:1px;background:#d9d9d9;"></div>
</body></html>
